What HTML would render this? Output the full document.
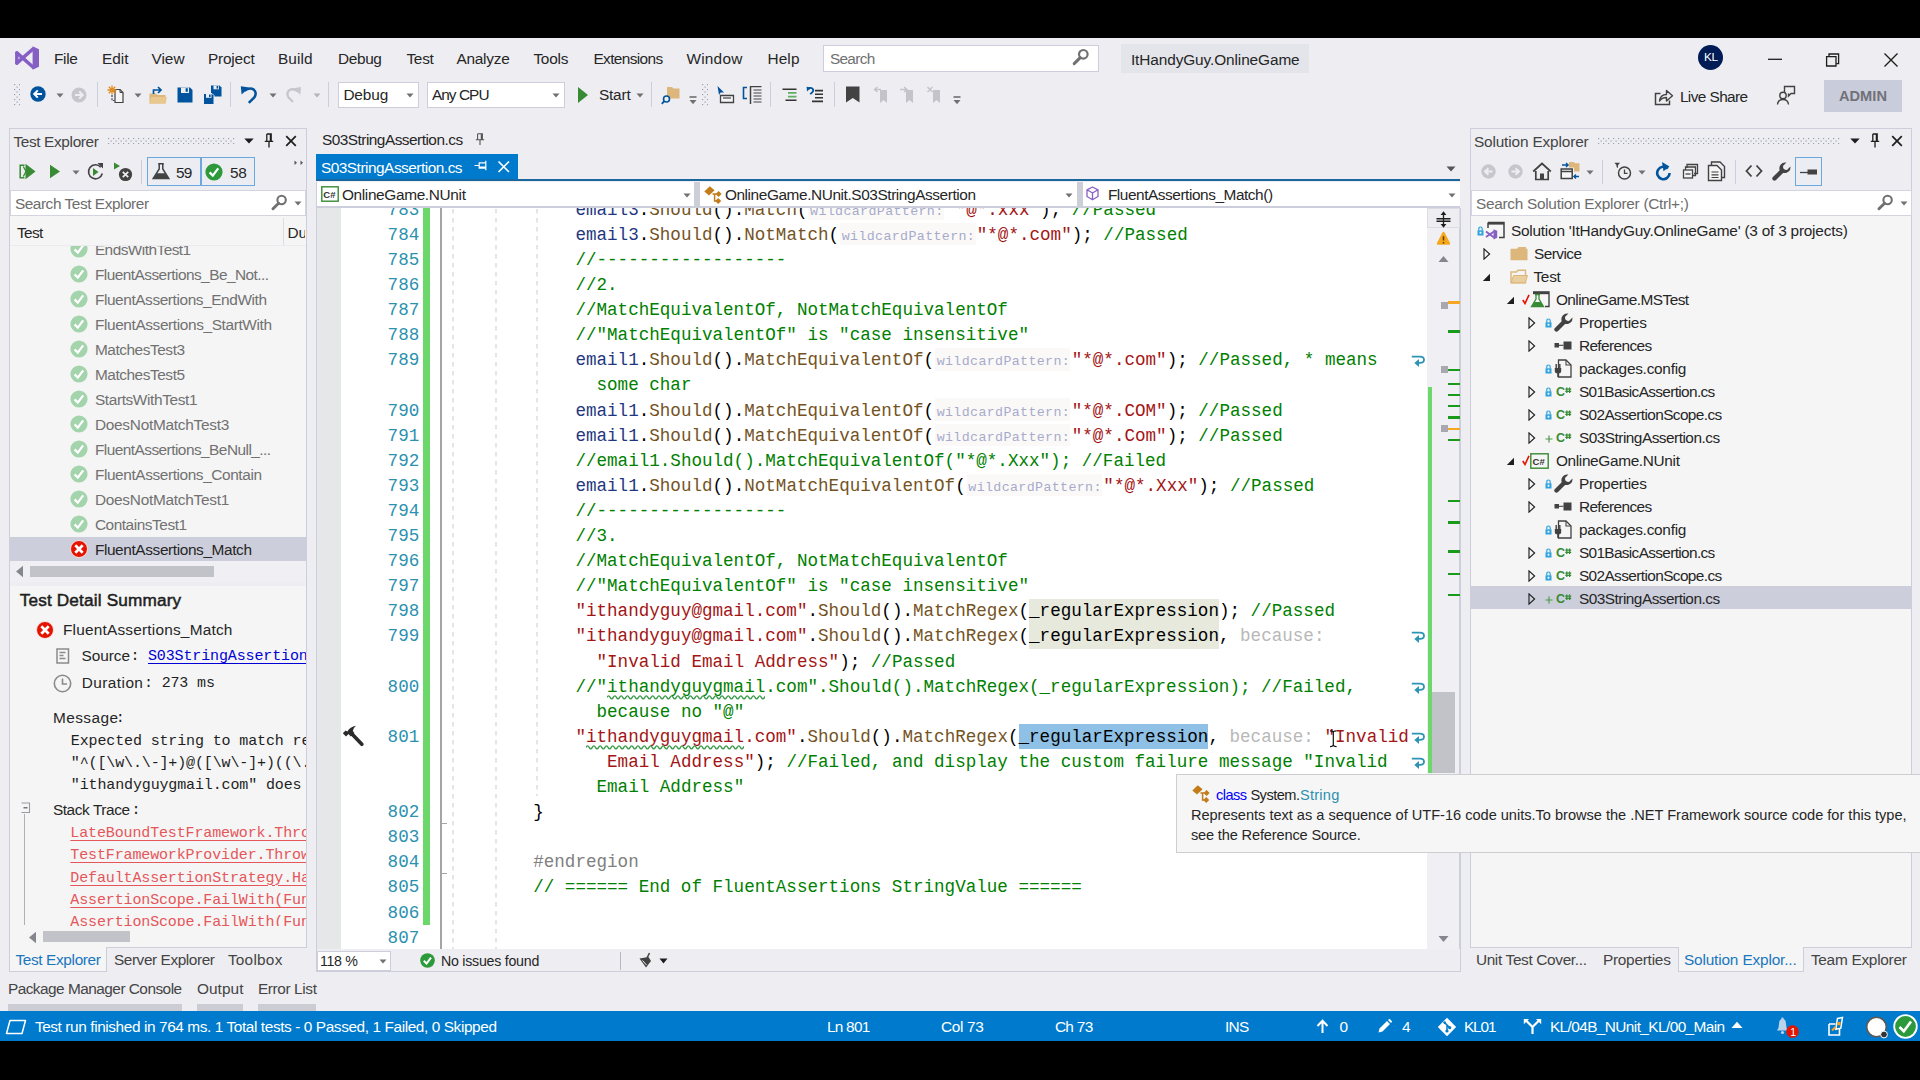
<!DOCTYPE html>
<html><head><meta charset="utf-8"><title>IDE</title><style>
html,body{margin:0;padding:0;background:#000;}
body{width:1920px;height:1080px;position:relative;overflow:hidden;font-family:"Liberation Sans",sans-serif;}
.a{position:absolute;display:block;}
.t{white-space:pre;}
</style></head><body>
<div class="a" style="left:0px;top:0px;width:1920px;height:38px;background:#000;"></div>
<div class="a" style="left:0px;top:38px;width:1920px;height:973px;background:#eeeef2;"></div>
<div class="a" style="left:0px;top:1011px;width:1920px;height:30px;background:#007acc;"></div>
<div class="a" style="left:0px;top:1041px;width:1920px;height:39px;background:#000;"></div>
<svg class="a" style="left:15px;top:46px;" width="24" height="24" viewBox="0 0 24 24"><path d="M17.6 0.2 L24 3.3 V20.7 L17.6 23.8 Z" fill="#865fc5"/><path d="M1.9 6.9 L18.2 21.2 M1.9 17.1 L18.2 2.8" stroke="#865fc5" stroke-width="3.5" stroke-linecap="round" fill="none"/><path d="M1.8 7 V17" stroke="#865fc5" stroke-width="3.4" stroke-linecap="round"/></svg>
<span class="a t" style="left:53.90px;top:48.51px;font-size:15.4px;line-height:20px;color:#262626;letter-spacing:-0.278px;">File</span>
<span class="a t" style="left:101.90px;top:48.51px;font-size:15.4px;line-height:20px;color:#262626;letter-spacing:0.042px;">Edit</span>
<span class="a t" style="left:151.40px;top:48.51px;font-size:15.4px;line-height:20px;color:#262626;letter-spacing:0.027px;">View</span>
<span class="a t" style="left:207.90px;top:48.51px;font-size:15.4px;line-height:20px;color:#262626;letter-spacing:-0.172px;">Project</span>
<span class="a t" style="left:277.90px;top:48.51px;font-size:15.4px;line-height:20px;color:#262626;letter-spacing:0.093px;">Build</span>
<span class="a t" style="left:337.90px;top:48.51px;font-size:15.4px;line-height:20px;color:#262626;letter-spacing:-0.332px;">Debug</span>
<span class="a t" style="left:406.40px;top:48.51px;font-size:15.4px;line-height:20px;color:#262626;letter-spacing:-0.259px;">Test</span>
<span class="a t" style="left:456.40px;top:48.51px;font-size:15.4px;line-height:20px;color:#262626;letter-spacing:-0.224px;">Analyze</span>
<span class="a t" style="left:533.40px;top:48.51px;font-size:15.4px;line-height:20px;color:#262626;letter-spacing:-0.247px;">Tools</span>
<span class="a t" style="left:593.40px;top:48.51px;font-size:15.4px;line-height:20px;color:#262626;letter-spacing:-0.610px;">Extensions</span>
<span class="a t" style="left:686.40px;top:48.51px;font-size:15.4px;line-height:20px;color:#262626;letter-spacing:0.242px;">Window</span>
<span class="a t" style="left:767.40px;top:48.51px;font-size:15.4px;line-height:20px;color:#262626;letter-spacing:0.136px;">Help</span>
<div class="a" style="left:823px;top:44.5px;width:276px;height:27px;background:#fff;border:1px solid #cccedb;box-sizing:border-box;"></div>
<span class="a t" style="left:829.90px;top:48.51px;font-size:15.4px;line-height:20px;color:#717171;letter-spacing:-0.678px;">Search</span>
<svg class="a" style="left:1071.5px;top:48.2px;" width="18" height="18" viewBox="0 0 18 18"><circle cx="11.3" cy="6.3" r="4.3" fill="none" stroke="#717171" stroke-width="2.2"/><path d="M8.2 9.6 L2.2 15.6" stroke="#717171" stroke-width="3" stroke-linecap="round"/></svg>
<div class="a" style="left:1121px;top:43.7px;width:187.5px;height:29.4px;background:#e4e5ea;"></div>
<span class="a t" style="left:1130.90px;top:50.31px;font-size:15.4px;line-height:20px;color:#262626;letter-spacing:-0.101px;">ItHandyGuy.OnlineGame</span>
<div class="a" style="left:1698.2px;top:44.7px;width:25px;height:25px;background:#001b55;border-radius:50%;"></div>
<span class="a t" style="left:1703.90px;top:50.20px;font-size:11.8px;line-height:15px;color:#fff;letter-spacing:-0.269px;">KL</span>
<svg class="a" style="left:1766px;top:50px;" width="18" height="18" viewBox="0 0 18 18"><path d="M2 9.3 H16" stroke="#1e1e1e" stroke-width="1.3"/></svg>
<svg class="a" style="left:1824px;top:51px;" width="18" height="18" viewBox="0 0 18 18"><path d="M2.6 5.6 H12 V15 H2.6 Z" fill="none" stroke="#1e1e1e" stroke-width="1.3"/><path d="M5 5.4 V3 H14.6 V12.6 H12.2" fill="none" stroke="#1e1e1e" stroke-width="1.3"/></svg>
<svg class="a" style="left:1882px;top:51px;" width="18" height="18" viewBox="0 0 18 18"><path d="M2.5 2.5 L15.5 15.5 M15.5 2.5 L2.5 15.5" stroke="#1e1e1e" stroke-width="1.4"/></svg>
<svg class="a" style="left:14px;top:84px" width="6.3" height="22"><defs><pattern id="vg14" width="5" height="5" patternUnits="userSpaceOnUse"><rect x="0" y="0" width="1.2" height="1.2" fill="#9a9cb0"/><rect x="2.5" y="2.5" width="1.2" height="1.2" fill="#9a9cb0"/></pattern></defs><rect width="6.3" height="22" fill="url(#vg14)"/></svg>
<svg class="a" style="left:30px;top:86px;" width="16" height="16" viewBox="0 0 16 16"><circle cx="8" cy="8" r="7.7" fill="#00539c"/><path d="M12 8 H4.6 M7.8 4.4 L4.2 8 L7.8 11.6" stroke="#fff" stroke-width="2" fill="none"/></svg>
<svg class="a" style="left:55.5px;top:92.5px;" width="8" height="5" viewBox="0 0 8 5"><path d="M0.5 0.5 H7.5 L4 4.5 Z" fill="#717171"/></svg>
<svg class="a" style="left:71px;top:87px;" width="16" height="16" viewBox="0 0 16 16"><circle cx="8" cy="8" r="7.5" fill="#c6c6cc"/><path d="M4 8 H11.4 M8.2 4.4 L11.8 8 L8.2 11.6" stroke="#eeeef2" stroke-width="2" fill="none"/></svg>
<div class="a" style="left:97px;top:82px;width:1px;height:25px;background:#cccedb;"></div>
<svg class="a" style="left:107px;top:85px;" width="18" height="20" viewBox="0 0 18 20"><path d="M8 4.5 H13 L16 7.5 V17.5 H8 Z" fill="#f5f5f5" stroke="#424242" stroke-width="1.2"/><path d="M13 4.5 V7.5 H16" fill="none" stroke="#424242" stroke-width="1"/><path d="M5 10 V15.5 H7.5" fill="none" stroke="#424242" stroke-width="1.2" stroke-dasharray="2 1.2"/><path d="M5 0.5 V9.5 M0.5 5 H9.5 M1.8 1.8 L8.2 8.2 M8.2 1.8 L1.8 8.2" stroke="#e08a1e" stroke-width="1.3"/></svg>
<svg class="a" style="left:133.5px;top:92.5px;" width="8" height="5" viewBox="0 0 8 5"><path d="M0.5 0.5 H7.5 L4 4.5 Z" fill="#717171"/></svg>
<svg class="a" style="left:148px;top:85px;" width="20" height="20" viewBox="0 0 20 20"><path d="M1.5 8.5 H8 L9.5 10 H17.5 V18.5 H1.5 Z" fill="#dcb67a"/><path d="M3 12 H19 L17.5 18.5 H1.5 Z" fill="#e8c88e"/><path d="M5.5 9 V5 H12.5 M10 2 L13 5 L10 8" fill="none" stroke="#00539c" stroke-width="1.7"/></svg>
<svg class="a" style="left:177px;top:87px;" width="16" height="16" viewBox="0 0 16 16"><path d="M0.5 0.5 H13 L15.5 3 V15.5 H0.5 Z" fill="#00539c"/><rect x="4" y="0.5" width="8" height="5.5" fill="#eeeef2"/><rect x="8.6" y="1.2" width="2.2" height="3.6" fill="#00539c"/></svg>
<svg class="a" style="left:203px;top:85px;" width="19" height="20" viewBox="0 0 19 20"><path d="M8 0.5 H16.5 L18.5 2.5 V11.5 H8 Z" fill="#00539c"/><rect x="10.5" y="0.5" width="5.5" height="3.8" fill="#eeeef2"/><rect x="13.6" y="1" width="1.6" height="2.6" fill="#00539c"/><path d="M0.5 8.5 H9 L11 10.5 V19.5 H0.5 Z" fill="#00539c" stroke="#eeeef2" stroke-width="1"/><rect x="3" y="9" width="5.5" height="3.8" fill="#eeeef2"/><rect x="6" y="9.5" width="1.6" height="2.6" fill="#00539c"/></svg>
<div class="a" style="left:230px;top:82px;width:1px;height:25px;background:#cccedb;"></div>
<svg class="a" style="left:240px;top:85px;" width="18" height="20" viewBox="0 0 18 20"><path d="M4.5 5.8 Q9.5 2 13.8 4.6 Q17.3 8 14.3 12.5 L8.8 17.8" fill="none" stroke="#00539c" stroke-width="2.5"/><path d="M0.8 1.2 L1.6 9.6 L9.2 2.4 Z" fill="#00539c"/></svg>
<svg class="a" style="left:268.5px;top:92.5px;" width="8" height="5" viewBox="0 0 8 5"><path d="M0.5 0.5 H7.5 L4 4.5 Z" fill="#717171"/></svg>
<svg class="a" style="left:285px;top:86px;" width="17" height="18" viewBox="0 0 17 18"><path d="M12.5 5.2 Q8 1.8 4 4.4 Q1 7.6 3.6 11.6 L8 16" fill="none" stroke="#c6c6cc" stroke-width="2.3"/><path d="M16 1 L15.3 8.8 L8.2 2.2 Z" fill="#c6c6cc"/></svg>
<svg class="a" style="left:312.5px;top:92.5px;" width="8" height="5" viewBox="0 0 8 5"><path d="M0.5 0.5 H7.5 L4 4.5 Z" fill="#b4b4ba"/></svg>
<div class="a" style="left:328px;top:82px;width:1px;height:25px;background:#cccedb;"></div>
<div class="a" style="left:338px;top:81.5px;width:80.5px;height:26px;background:#fff;border:1px solid #cccedb;box-sizing:border-box;"></div>
<span class="a t" style="left:343.40px;top:84.71px;font-size:15.4px;line-height:20px;color:#262626;letter-spacing:-0.132px;">Debug</span>
<svg class="a" style="left:405.5px;top:92.5px;" width="8" height="5" viewBox="0 0 8 5"><path d="M0.5 0.5 H7.5 L4 4.5 Z" fill="#717171"/></svg>
<div class="a" style="left:427px;top:81.5px;width:137.5px;height:26px;background:#fff;border:1px solid #cccedb;box-sizing:border-box;"></div>
<span class="a t" style="left:431.90px;top:84.71px;font-size:15.4px;line-height:20px;color:#262626;letter-spacing:-0.942px;">Any CPU</span>
<svg class="a" style="left:551.5px;top:92.5px;" width="8" height="5" viewBox="0 0 8 5"><path d="M0.5 0.5 H7.5 L4 4.5 Z" fill="#717171"/></svg>
<svg class="a" style="left:577px;top:86px;" width="12" height="18" viewBox="0 0 12 18"><path d="M1 1 L11 9 L1 17 Z" fill="#388a34"/></svg>
<span class="a t" style="left:598.90px;top:84.71px;font-size:15.4px;line-height:20px;color:#262626;letter-spacing:-0.163px;">Start</span>
<svg class="a" style="left:635.5px;top:92.5px;" width="8" height="5" viewBox="0 0 8 5"><path d="M0.5 0.5 H7.5 L4 4.5 Z" fill="#717171"/></svg>
<div class="a" style="left:651px;top:82px;width:1px;height:25px;background:#cccedb;"></div>
<svg class="a" style="left:661px;top:85px;" width="20" height="20" viewBox="0 0 20 20"><path d="M6 2 H11 L12.5 3.5 H18.5 V13.5 H6 Z" fill="#dcb67a"/><circle cx="5.5" cy="14" r="3" fill="#eeeef2" stroke="#00539c" stroke-width="1.6"/><path d="M3.3 16.2 L0.8 18.8" stroke="#00539c" stroke-width="1.8"/></svg>
<svg class="a" style="left:689px;top:96px;" width="8" height="9" viewBox="0 0 8 9"><path d="M0.5 1 H7.5" stroke="#424242" stroke-width="1.2"/><path d="M0.5 4 H7.5 L4 8.2 Z" fill="#717171"/></svg>
<svg class="a" style="left:702px;top:84px" width="6.3" height="22"><defs><pattern id="vg702" width="5" height="5" patternUnits="userSpaceOnUse"><rect x="0" y="0" width="1.2" height="1.2" fill="#9a9cb0"/><rect x="2.5" y="2.5" width="1.2" height="1.2" fill="#9a9cb0"/></pattern></defs><rect width="6.3" height="22" fill="url(#vg702)"/></svg>
<svg class="a" style="left:716px;top:85px;" width="20" height="20" viewBox="0 0 20 20"><path d="M1.5 1 L8 7.5 H4.6 L3 10 Z" fill="#00539c"/><path d="M4.5 10.5 H17.5 V17.5 H4.5 Z" fill="#f5f5f5" stroke="#424242" stroke-width="1.3"/><path d="M7 13 H15" stroke="#424242" stroke-width="1.2"/></svg>
<svg class="a" style="left:742px;top:85px;" width="21" height="20" viewBox="0 0 21 20"><path d="M5 2.5 H1.5 V13.5 H5" fill="none" stroke="#00539c" stroke-width="1.6"/><path d="M8.5 1 V19" stroke="#424242" stroke-width="1.5"/><path d="M8.5 1.6 H19.5 M11.5 5 H19.5 M11.5 8 H19.5 M11.5 11 H19.5 M11.5 14 H19.5 M11.5 17 H19.5" stroke="#424242" stroke-width="1.2"/></svg>
<div class="a" style="left:770px;top:82px;width:1px;height:25px;background:#cccedb;"></div>
<svg class="a" style="left:782px;top:87.5px;" width="15" height="14" viewBox="0 0 15 14"><path d="M0.5 1.2 H14.5 M3.5 12.3 H14.5" stroke="#333" stroke-width="1.6"/><path d="M6 4.9 H14.5 M6 8.6 H14.5" stroke="#5fae5f" stroke-width="1.6"/></svg>
<svg class="a" style="left:806px;top:86px;" width="18" height="18" viewBox="0 0 18 18"><path d="M9 4.6 H17 M9 8.2 H17 M9 11.8 H17 M6 15.4 H17" stroke="#333" stroke-width="1.6"/><path d="M2.5 3 Q4.5 1 6.5 2.6 Q8.2 4.6 6 6.6 L4.2 8.2" fill="none" stroke="#00539c" stroke-width="1.8"/><path d="M0.6 0.8 L1 5.6 L5 1.4 Z" fill="#00539c"/></svg>
<div class="a" style="left:834px;top:82px;width:1px;height:25px;background:#cccedb;"></div>
<svg class="a" style="left:845px;top:86px;" width="16" height="18" viewBox="0 0 16 18"><path d="M1 0.5 H14.5 V16.5 L7.8 12 L1 16.5 Z" fill="#424242"/></svg>
<svg class="a" style="left:873px;top:86px;" width="17" height="18" viewBox="0 0 17 18"><path d="M7 4 H14 V17 L10.5 14 L7 17 Z" fill="#c3c3c9"/><path d="M8 3.5 H2 M4.5 1 L1.5 3.5 L4.5 6" stroke="#c3c3c9" stroke-width="1.4" fill="none"/></svg>
<svg class="a" style="left:899px;top:86px;" width="17" height="18" viewBox="0 0 17 18"><path d="M7 4 H14 V17 L10.5 14 L7 17 Z" fill="#c3c3c9"/><path d="M1 3.5 H7.5 M5 1 L8 3.5 L5 6" stroke="#c3c3c9" stroke-width="1.4" fill="none"/></svg>
<svg class="a" style="left:926px;top:86px;" width="17" height="18" viewBox="0 0 17 18"><path d="M7 4 H14 V17 L10.5 14 L7 17 Z" fill="#c3c3c9"/><path d="M1.5 1 L6.5 6 M6.5 1 L1.5 6" stroke="#c3c3c9" stroke-width="1.4" fill="none"/></svg>
<svg class="a" style="left:953px;top:96px;" width="8" height="9" viewBox="0 0 8 9"><path d="M0.5 1 H7.5" stroke="#424242" stroke-width="1.2"/><path d="M0.5 4 H7.5 L4 8.2 Z" fill="#717171"/></svg>
<svg class="a" style="left:1654px;top:88px;" width="20" height="18" viewBox="0 0 20 18"><path d="M6.5 5.5 H1.5 V16.5 H15.5 V12.5" fill="none" stroke="#424242" stroke-width="1.5"/><path d="M5.5 13 Q6.5 6.5 12.5 6.5 V2.5 L18.5 7.8 L12.5 13 V9.5 Q8 9.5 5.5 13 Z" fill="none" stroke="#424242" stroke-width="1.4" stroke-linejoin="round"/></svg>
<span class="a t" style="left:1679.90px;top:86.91px;font-size:15.4px;line-height:20px;color:#262626;letter-spacing:-0.589px;">Live Share</span>
<svg class="a" style="left:1776px;top:85px;" width="20" height="20" viewBox="0 0 20 20"><path d="M8.5 8.5 V1.5 H18.5 V8.5 H15 L12.5 11 V8.5" fill="none" stroke="#424242" stroke-width="1.4"/><circle cx="7" cy="10.5" r="3.2" fill="#eeeef2" stroke="#424242" stroke-width="1.4"/><path d="M1.5 19.5 Q2 14.5 7 14.5 Q12 14.5 12.5 19.5" fill="none" stroke="#424242" stroke-width="1.4"/></svg>
<div class="a" style="left:1824px;top:80px;width:78px;height:32px;background:#c9ccda;"></div>
<span class="a t" style="left:1838.90px;top:86.87px;font-size:14.6px;line-height:19px;color:#717179;font-weight:700;letter-spacing:0.071px;">ADMIN</span>
<div class="a" style="left:8.5px;top:127.5px;width:298px;height:820px;background:#f5f5f5;border:1px solid #cccedb;box-sizing:border-box;"></div>
<div class="a" style="left:9.5px;top:128.5px;width:296px;height:61px;background:#eeeef2;"></div>
<span class="a t" style="left:13.40px;top:131.71px;font-size:15.4px;line-height:20px;color:#444;letter-spacing:-0.355px;">Test Explorer</span>
<svg class="a" style="left:108px;top:138px" width="127" height="6.3"><defs><pattern id="g108" width="5" height="5" patternUnits="userSpaceOnUse"><rect x="0" y="0" width="1.2" height="1.2" fill="#9a9cb0"/><rect x="2.5" y="2.5" width="1.2" height="1.2" fill="#9a9cb0"/></pattern></defs><rect width="127" height="6.3" fill="url(#g108)"/></svg>
<svg class="a" style="left:243.5px;top:138px;" width="10" height="6" viewBox="0 0 10 6"><path d="M0.3 0.5 H9.7 L5 5.5 Z" fill="#1e1e1e"/></svg>
<svg class="a" style="left:264px;top:133px;" width="10" height="16" viewBox="0 0 10 16"><path d="M2.8 1 H7.2 V8 M2.8 1 V8 M0.8 8.3 H9.2 M5 8.5 V14.5 M6.4 1 V8" stroke="#1e1e1e" stroke-width="1.3" fill="none"/></svg>
<svg class="a" style="left:285px;top:135px;" width="12" height="12" viewBox="0 0 12 12"><path d="M1.2 1.2 L10.8 10.8 M10.8 1.2 L1.2 10.8" stroke="#1e1e1e" stroke-width="1.7"/></svg>
<svg class="a" style="left:18.5px;top:163px;" width="17" height="17" viewBox="0 0 17 17"><path d="M5.5 2.2 H1.2 V14.8 H5.5" fill="none" stroke="#388a34" stroke-width="1.5"/><path d="M4.3 3.5 L7 8.5 L4.3 13.5" fill="none" stroke="#388a34" stroke-width="1.3"/><path d="M6.5 0.8 L16.5 8.5 L6.5 16.2 Z" fill="#388a34"/></svg>
<svg class="a" style="left:49px;top:163.5px;" width="12" height="15" viewBox="0 0 12 15"><path d="M1 0.8 L11 7.5 L1 14.2 Z" fill="#388a34"/></svg>
<svg class="a" style="left:71.5px;top:169.5px;" width="8" height="5" viewBox="0 0 8 5"><path d="M0.5 0.5 H7.5 L4 4.5 Z" fill="#717171"/></svg>
<svg class="a" style="left:86px;top:162px;" width="19" height="19" viewBox="0 0 19 19"><path d="M14.8 5.2 A7 7 0 1 0 16.3 11.5" fill="none" stroke="#424242" stroke-width="1.6"/><path d="M11.5 1 H17 V6.5 Z" fill="#424242"/><path d="M7 6 L12.5 10 L7 14 Z" fill="#388a34"/></svg>
<svg class="a" style="left:113px;top:161px;" width="20" height="21" viewBox="0 0 20 21"><path d="M1 1.5 L7 5 L1 8.5 Z" fill="#388a34"/><circle cx="12.5" cy="13.5" r="6.6" fill="#424242"/><path d="M9.8 10.8 L15.2 16.2 M15.2 10.8 L9.8 16.2" stroke="#eeeef2" stroke-width="1.7"/></svg>
<div class="a" style="left:141px;top:160px;width:1px;height:24px;background:#cccedb;"></div>
<div class="a" style="left:147px;top:157px;width:54px;height:28.5px;background:#ecedf3;border:1px solid #6aa9e0;box-sizing:border-box;"></div>
<div class="a" style="left:200.5px;top:157px;width:54.5px;height:28.5px;background:#ecedf3;border:1px solid #6aa9e0;box-sizing:border-box;"></div>
<svg class="a" style="left:152px;top:163px;" width="18" height="17" viewBox="0 0 18 17"><path d="M6.2 0.8 H11.8 M7.2 1 V6 L1.2 15.5 H16.8 L10.8 6 V1" fill="none" stroke="#424242" stroke-width="1.5"/><path d="M5 10.2 H13 L16.3 15.5 H1.7 Z" fill="#424242"/></svg>
<span class="a t" style="left:175.90px;top:162.51px;font-size:15.4px;line-height:20px;color:#262626;letter-spacing:-0.713px;">59</span>
<svg class="a" style="left:204.5px;top:162.5px;" width="18" height="18" viewBox="0 0 18 18"><circle cx="9" cy="9" r="8.6" fill="#2c9a3b"/><path d="M4.6 9.4 L7.8 12.6 L13.2 5.4" fill="none" stroke="#fff" stroke-width="2.3"/></svg>
<span class="a t" style="left:229.90px;top:162.51px;font-size:15.4px;line-height:20px;color:#262626;letter-spacing:-0.213px;">58</span>
<svg class="a" style="left:294px;top:160px;" width="10" height="6" viewBox="0 0 10 6"><path d="M0.5 0.5 L3 2.8 L0.5 5 Z M6.5 0.5 L9 2.8 L6.5 5 Z" fill="#555"/></svg>
<div class="a" style="left:10px;top:189.5px;width:295.5px;height:26.2px;background:#fff;border:1px solid #d3d4df;box-sizing:border-box;"></div>
<span class="a t" style="left:14.90px;top:193.71px;font-size:15.4px;line-height:20px;color:#6d6d6d;letter-spacing:-0.444px;">Search Test Explorer</span>
<svg class="a" style="left:271px;top:194px;" width="17" height="17" viewBox="0 0 17 17"><circle cx="10.6" cy="6" r="4.2" fill="none" stroke="#717171" stroke-width="2.1"/><path d="M7.6 9.2 L2 14.8" stroke="#717171" stroke-width="2.9" stroke-linecap="round"/></svg>
<svg class="a" style="left:293.5px;top:201px;" width="8" height="5" viewBox="0 0 8 5"><path d="M0.5 0.5 H7.5 L4 4.5 Z" fill="#717171"/></svg>
<div class="a" style="left:9.5px;top:216px;width:296px;height:30px;background:#f5f5f5;"></div>
<span class="a t" style="left:16.90px;top:222.51px;font-size:15.4px;line-height:20px;color:#262626;letter-spacing:-0.634px;">Test</span>
<div class="a" style="left:283px;top:218px;width:1px;height:27px;background:#dcdde4;"></div>
<span class="a t" style="left:287.40px;top:222.51px;font-size:15.4px;line-height:20px;color:#262626;width:18px;overflow:hidden;">Du</span>
<div class="a" style="left:9.5px;top:245px;width:296px;height:1px;background:#ebebef;"></div>
<div class="a" style="left:9.5px;top:246px;width:296px;height:316px;overflow:hidden">
<svg class="a" style="left:60.5px;top:-6.3px;" width="18" height="18" viewBox="0 0 18 18"><circle cx="9" cy="9" r="8.6" fill="#a3d4ab"/><path d="M4.6 9.4 L7.8 12.6 L13.2 5.4" fill="none" stroke="#fff" stroke-width="2.3"/></svg>
<span class="a t" style="left:85.40px;top:-6.19px;font-size:15.4px;line-height:20px;color:#717171;letter-spacing:-0.535px;">EndsWithTest1</span>
<svg class="a" style="left:60.5px;top:18.7px;" width="18" height="18" viewBox="0 0 18 18"><circle cx="9" cy="9" r="8.6" fill="#a3d4ab"/><path d="M4.6 9.4 L7.8 12.6 L13.2 5.4" fill="none" stroke="#fff" stroke-width="2.3"/></svg>
<span class="a t" style="left:85.40px;top:18.81px;font-size:15.4px;line-height:20px;color:#717171;letter-spacing:-0.525px;">FluentAssertions_Be_Not...</span>
<svg class="a" style="left:60.5px;top:43.7px;" width="18" height="18" viewBox="0 0 18 18"><circle cx="9" cy="9" r="8.6" fill="#a3d4ab"/><path d="M4.6 9.4 L7.8 12.6 L13.2 5.4" fill="none" stroke="#fff" stroke-width="2.3"/></svg>
<span class="a t" style="left:85.40px;top:43.81px;font-size:15.4px;line-height:20px;color:#717171;letter-spacing:-0.402px;">FluentAssertions_EndWith</span>
<svg class="a" style="left:60.5px;top:68.7px;" width="18" height="18" viewBox="0 0 18 18"><circle cx="9" cy="9" r="8.6" fill="#a3d4ab"/><path d="M4.6 9.4 L7.8 12.6 L13.2 5.4" fill="none" stroke="#fff" stroke-width="2.3"/></svg>
<span class="a t" style="left:85.40px;top:68.81px;font-size:15.4px;line-height:20px;color:#717171;letter-spacing:-0.376px;">FluentAssertions_StartWith</span>
<svg class="a" style="left:60.5px;top:93.7px;" width="18" height="18" viewBox="0 0 18 18"><circle cx="9" cy="9" r="8.6" fill="#a3d4ab"/><path d="M4.6 9.4 L7.8 12.6 L13.2 5.4" fill="none" stroke="#fff" stroke-width="2.3"/></svg>
<span class="a t" style="left:85.40px;top:93.81px;font-size:15.4px;line-height:20px;color:#717171;letter-spacing:-0.438px;">MatchesTest3</span>
<svg class="a" style="left:60.5px;top:118.7px;" width="18" height="18" viewBox="0 0 18 18"><circle cx="9" cy="9" r="8.6" fill="#a3d4ab"/><path d="M4.6 9.4 L7.8 12.6 L13.2 5.4" fill="none" stroke="#fff" stroke-width="2.3"/></svg>
<span class="a t" style="left:85.40px;top:118.81px;font-size:15.4px;line-height:20px;color:#717171;letter-spacing:-0.438px;">MatchesTest5</span>
<svg class="a" style="left:60.5px;top:143.7px;" width="18" height="18" viewBox="0 0 18 18"><circle cx="9" cy="9" r="8.6" fill="#a3d4ab"/><path d="M4.6 9.4 L7.8 12.6 L13.2 5.4" fill="none" stroke="#fff" stroke-width="2.3"/></svg>
<span class="a t" style="left:85.40px;top:143.81px;font-size:15.4px;line-height:20px;color:#717171;letter-spacing:-0.371px;">StartsWithTest1</span>
<svg class="a" style="left:60.5px;top:168.7px;" width="18" height="18" viewBox="0 0 18 18"><circle cx="9" cy="9" r="8.6" fill="#a3d4ab"/><path d="M4.6 9.4 L7.8 12.6 L13.2 5.4" fill="none" stroke="#fff" stroke-width="2.3"/></svg>
<span class="a t" style="left:85.40px;top:168.81px;font-size:15.4px;line-height:20px;color:#717171;letter-spacing:-0.258px;">DoesNotMatchTest3</span>
<svg class="a" style="left:60.5px;top:193.7px;" width="18" height="18" viewBox="0 0 18 18"><circle cx="9" cy="9" r="8.6" fill="#a3d4ab"/><path d="M4.6 9.4 L7.8 12.6 L13.2 5.4" fill="none" stroke="#fff" stroke-width="2.3"/></svg>
<span class="a t" style="left:85.40px;top:193.81px;font-size:15.4px;line-height:20px;color:#717171;letter-spacing:-0.527px;">FluentAssertions_BeNull_...</span>
<svg class="a" style="left:60.5px;top:218.7px;" width="18" height="18" viewBox="0 0 18 18"><circle cx="9" cy="9" r="8.6" fill="#a3d4ab"/><path d="M4.6 9.4 L7.8 12.6 L13.2 5.4" fill="none" stroke="#fff" stroke-width="2.3"/></svg>
<span class="a t" style="left:85.40px;top:218.81px;font-size:15.4px;line-height:20px;color:#717171;letter-spacing:-0.397px;">FluentAssertions_Contain</span>
<svg class="a" style="left:60.5px;top:243.7px;" width="18" height="18" viewBox="0 0 18 18"><circle cx="9" cy="9" r="8.6" fill="#a3d4ab"/><path d="M4.6 9.4 L7.8 12.6 L13.2 5.4" fill="none" stroke="#fff" stroke-width="2.3"/></svg>
<span class="a t" style="left:85.40px;top:243.81px;font-size:15.4px;line-height:20px;color:#717171;letter-spacing:-0.258px;">DoesNotMatchTest1</span>
<svg class="a" style="left:60.5px;top:268.7px;" width="18" height="18" viewBox="0 0 18 18"><circle cx="9" cy="9" r="8.6" fill="#a3d4ab"/><path d="M4.6 9.4 L7.8 12.6 L13.2 5.4" fill="none" stroke="#fff" stroke-width="2.3"/></svg>
<span class="a t" style="left:85.40px;top:268.81px;font-size:15.4px;line-height:20px;color:#717171;letter-spacing:-0.449px;">ContainsTest1</span>
</div>
<div class="a" style="left:9.5px;top:536.5px;width:296px;height:24px;background:#cccedb;"></div>
<svg class="a" style="left:70px;top:540px;" width="18" height="18" viewBox="0 0 18 18"><circle cx="9" cy="9" r="8.5" fill="#e51400" stroke="#fbeceb" stroke-width="0.9"/><path d="M5.3 5.3 L12.7 12.7 M12.7 5.3 L5.3 12.7" stroke="#fff" stroke-width="2.7"/></svg>
<span class="a t" style="left:94.90px;top:539.91px;font-size:15.4px;line-height:20px;color:#262626;letter-spacing:-0.382px;">FluentAssertions_Match</span>
<div class="a" style="left:9.5px;top:561px;width:296px;height:21px;background:#f0f0f4;"></div>
<svg class="a" style="left:15px;top:565px;" width="9" height="13" viewBox="0 0 9 13"><path d="M8 0.8 V12.2 L1 6.5 Z" fill="#86868e"/></svg>
<div class="a" style="left:30px;top:566px;width:184px;height:11px;background:#c2c3c9;"></div>
<div class="a" style="left:9.5px;top:582px;width:296px;height:4px;background:#eeeef2;"></div>
<span class="a t" style="left:19.70px;top:588.91px;font-size:17.2px;line-height:22px;color:#1e1e1e;letter-spacing:0.161px;-webkit-text-stroke:0.5px #1e1e1e;">Test Detail Summary</span>
<svg class="a" style="left:36px;top:621px;" width="18" height="18" viewBox="0 0 18 18"><circle cx="9" cy="9" r="8.5" fill="#e51400" stroke="#fbeceb" stroke-width="0.9"/><path d="M5.3 5.3 L12.7 12.7 M12.7 5.3 L5.3 12.7" stroke="#fff" stroke-width="2.7"/></svg>
<span class="a t" style="left:62.90px;top:619.61px;font-size:15.4px;line-height:20px;color:#262626;letter-spacing:0.209px;">FluentAssertions_Match</span>
<svg class="a" style="left:56px;top:648px;" width="14" height="16" viewBox="0 0 14 16"><path d="M1 1 H12.5 V15 H1 Z" fill="#f5f5f5" stroke="#8a8a8a" stroke-width="1.5"/><path d="M3.5 4.5 H9.5 M3.5 7.5 H7.5 M3.5 10.5 H9.5" stroke="#8a8a8a" stroke-width="1.4"/></svg>
<div class="a" style="left:9.5px;top:590px;width:296.5px;height:336px;overflow:hidden">
<span class="a t" style="left:71.90px;top:55.61px;font-size:15.4px;line-height:20px;color:#262626;letter-spacing:-0.011px;">Source</span>
<span class="a t" style="left:121.10px;top:57.30px;font-size:15px;line-height:20px;color:#1e1e1e;font-family:'Liberation Mono', monospace;letter-spacing:-0.1315px;">:</span>
<span class="a t" style="left:138.50px;top:57.30px;font-size:15px;line-height:20px;color:#0000d6;font-family:'Liberation Mono', monospace;letter-spacing:-0.1315px;text-decoration:underline;text-decoration-thickness:1.2px;text-underline-offset:2.6px;">S03StringAssertion.cs</span>
<span class="a t" style="left:72.20px;top:82.51px;font-size:15.4px;line-height:20px;color:#262626;letter-spacing:0.439px;">Duration</span>
<span class="a t" style="left:134.40px;top:84.30px;font-size:15px;line-height:20px;color:#1e1e1e;font-family:'Liberation Mono', monospace;letter-spacing:-0.1315px;">: 273 ms</span>
<span class="a t" style="left:43.40px;top:117.71px;font-size:15.4px;line-height:20px;color:#262626;letter-spacing:0.435px;">Message</span>
<span class="a t" style="left:106.30px;top:119.40px;font-size:15px;line-height:20px;color:#1e1e1e;font-family:'Liberation Mono', monospace;letter-spacing:-0.1315px;">:</span>
<span class="a t" style="left:61.30px;top:141.60px;font-size:15px;line-height:20px;color:#1e1e1e;font-family:'Liberation Mono', monospace;letter-spacing:-0.1315px;">Expected string to match regex</span>
<span class="a t" style="left:61.30px;top:163.60px;font-size:15px;line-height:20px;color:#1e1e1e;font-family:'Liberation Mono', monospace;letter-spacing:-0.1315px;">&quot;^([\w\.\-]+)@([\w\-]+)((\.(\w){2,3})+)$&quot;</span>
<span class="a t" style="left:61.30px;top:186.40px;font-size:15px;line-height:20px;color:#1e1e1e;font-family:'Liberation Mono', monospace;letter-spacing:-0.1315px;">&quot;ithandyguygmail.com&quot; does not match.</span>
<span class="a t" style="left:43.40px;top:209.91px;font-size:15.4px;line-height:20px;color:#262626;letter-spacing:-0.415px;">Stack Trace</span>
<span class="a t" style="left:122.00px;top:211.30px;font-size:15px;line-height:20px;color:#1e1e1e;font-family:'Liberation Mono', monospace;letter-spacing:-0.1315px;">:</span>
<span class="a t" style="left:60.80px;top:234.00px;font-size:15px;line-height:20px;color:#e5565a;font-family:'Liberation Mono', monospace;letter-spacing:-0.1315px;text-decoration:underline;text-decoration-thickness:1.2px;text-underline-offset:2.6px;">LateBoundTestFramework.Throw(String message)</span>
<span class="a t" style="left:60.80px;top:256.20px;font-size:15px;line-height:20px;color:#e5565a;font-family:'Liberation Mono', monospace;letter-spacing:-0.1315px;text-decoration:underline;text-decoration-thickness:1.2px;text-underline-offset:2.6px;">TestFrameworkProvider.Throw(String message)</span>
<span class="a t" style="left:60.80px;top:278.50px;font-size:15px;line-height:20px;color:#e5565a;font-family:'Liberation Mono', monospace;letter-spacing:-0.1315px;text-decoration:underline;text-decoration-thickness:1.2px;text-underline-offset:2.6px;">DefaultAssertionStrategy.HandleFailure(String message)</span>
<span class="a t" style="left:60.80px;top:300.80px;font-size:15px;line-height:20px;color:#e5565a;font-family:'Liberation Mono', monospace;letter-spacing:-0.1315px;text-decoration:underline;text-decoration-thickness:1.2px;text-underline-offset:2.6px;">AssertionScope.FailWith(Func`1 failReasonFunc)</span>
<span class="a t" style="left:60.80px;top:323.00px;font-size:15px;line-height:20px;color:#e5565a;font-family:'Liberation Mono', monospace;letter-spacing:-0.1315px;text-decoration:underline;text-decoration-thickness:1.2px;text-underline-offset:2.6px;">AssertionScope.FailWith(Func`1 failReasonFunc)</span>
</div>
<svg class="a" style="left:53px;top:674px;" width="19" height="19" viewBox="0 0 19 19"><circle cx="9.5" cy="9.5" r="8.2" fill="none" stroke="#8a8a8a" stroke-width="1.6"/><path d="M9.5 4.5 V10 H14" fill="none" stroke="#8a8a8a" stroke-width="1.6"/></svg>
<svg class="a" style="left:20px;top:802px;" width="11" height="12" viewBox="0 0 11 12"><path d="M1.5 1 H9.5 V10.5 H1.5" fill="none" stroke="#9a9aa2" stroke-width="1.1"/><path d="M3.5 5.8 H7.5" stroke="#55555c" stroke-width="1.2"/></svg>
<div class="a" style="left:24px;top:814px;width:1px;height:111px;background:#b0b0b8;"></div>
<svg class="a" style="left:27.5px;top:930.5px;" width="9" height="13" viewBox="0 0 9 13"><path d="M8 0.8 V12.2 L1 6.5 Z" fill="#86868e"/></svg>
<div class="a" style="left:43px;top:931px;width:87px;height:11px;background:#c2c3c9;"></div>
<div class="a" style="left:8.5px;top:947px;width:98px;height:24.5px;background:#f5f5f5;border:1px solid #cccedb;box-sizing:border-box;border-top:none;"></div>
<span class="a t" style="left:15.40px;top:949.91px;font-size:15.4px;line-height:20px;color:#1a77be;letter-spacing:-0.355px;">Test Explorer</span>
<span class="a t" style="left:113.90px;top:949.91px;font-size:15.4px;line-height:20px;color:#444;letter-spacing:-0.415px;">Server Explorer</span>
<span class="a t" style="left:227.90px;top:949.91px;font-size:15.4px;line-height:20px;color:#444;letter-spacing:0.234px;">Toolbox</span>
<span class="a t" style="left:321.90px;top:129.91px;font-size:15.4px;line-height:20px;color:#262626;letter-spacing:-0.511px;">S03StringAssertion.cs</span>
<svg class="a" style="left:475px;top:133px;" width="10" height="13" viewBox="0 0 10 13"><path d="M2.6 0.8 H7.4 V6.5 M2.6 0.8 V6.5 M0.8 6.8 H9.2 M5 7 V12 M6.3 1 V6.5" stroke="#555" stroke-width="1.1" fill="none"/></svg>
<div class="a" style="left:316px;top:154px;width:202px;height:27.2px;background:#007acc;"></div>
<div class="a" style="left:316px;top:178.8px;width:1144px;height:2.3px;background:#1b669d;"></div>
<span class="a t" style="left:320.90px;top:157.61px;font-size:15.4px;line-height:20px;color:#fff;letter-spacing:-0.487px;">S03StringAssertion.cs</span>
<svg class="a" style="left:474px;top:160px;" width="13" height="11" viewBox="0 0 13 11"><path d="M5.2 2.2 V8.8 M5.2 2.8 H11.5 M5.2 8.2 H11.5 M5.5 7 H11.5 M11.8 0.8 V10.2 M0.5 5.5 H5" stroke="#fff" stroke-width="1.2" fill="none"/></svg>
<svg class="a" style="left:497px;top:160px;" width="14" height="14" viewBox="0 0 14 14"><path d="M1.5 1.5 L12 12 M12 1.5 L1.5 12" stroke="#fff" stroke-width="1.7"/></svg>
<svg class="a" style="left:1446px;top:165.5px;" width="10" height="6" viewBox="0 0 10 6"><path d="M0.5 0.5 H9.5 L5 5.5 Z" fill="#555"/></svg>
<div class="a" style="left:316px;top:181.7px;width:1144px;height:25.8px;background:#fff;"></div>
<div class="a" style="left:316px;top:206.2px;width:1144px;height:1.6px;background:#cccedb;"></div>
<div class="a" style="left:316px;top:181.7px;width:1.2px;height:26px;background:#cccedb;"></div>
<div class="a" style="left:694px;top:181.7px;width:6px;height:25px;background:#ccced8;"></div>
<div class="a" style="left:1077px;top:181.7px;width:6px;height:25px;background:#ccced8;"></div>
<svg class="a" style="left:321px;top:186px;" width="18" height="16" viewBox="0 0 18 16"><rect x="0.8" y="0.8" width="16.4" height="14.4" fill="#fff" stroke="#388a34" stroke-width="1.4"/><text x="2.3" y="11.8" font-family="Liberation Sans" font-weight="700" font-size="9.5" fill="#333">C#</text></svg>
<span class="a t" style="left:341.90px;top:185.11px;font-size:15.4px;line-height:20px;color:#262626;letter-spacing:-0.342px;">OnlineGame.NUnit</span>
<svg class="a" style="left:683px;top:192.5px;" width="8" height="5" viewBox="0 0 8 5"><path d="M0.5 0.5 H7.5 L4 4.5 Z" fill="#717171"/></svg>
<svg class="a" style="left:704px;top:185.5px;" width="18" height="18" viewBox="0 0 18 18"><path d="M0.3 5.4 L5.8 0.3 L10.6 4.3 L5 9.6 Z" fill="#c27d1a"/><path d="M8.5 8 H12.5 M10.6 8 V15 H12" fill="none" stroke="#c27d1a" stroke-width="1.5"/><path d="M14.6 5 L17.6 8 L14.6 11 L11.6 8 Z M14.2 12 L17.2 15 L14.2 18 L11.2 15 Z" fill="#c27d1a"/></svg>
<span class="a t" style="left:724.90px;top:185.11px;font-size:15.4px;line-height:20px;color:#262626;letter-spacing:-0.414px;">OnlineGame.NUnit.S03StringAssertion</span>
<svg class="a" style="left:1065px;top:192.5px;" width="8" height="5" viewBox="0 0 8 5"><path d="M0.5 0.5 H7.5 L4 4.5 Z" fill="#717171"/></svg>
<svg class="a" style="left:1086px;top:186px;" width="13" height="15" viewBox="0 0 13 15"><path d="M6.5 1 L12 3.8 V10.5 L6.5 13.8 L1 10.5 V3.8 Z M1 3.8 L6.5 7 L12 3.8 M6.5 7 V13.8" fill="none" stroke="#8a5fc4" stroke-width="1.3" stroke-linejoin="round"/></svg>
<span class="a t" style="left:1107.90px;top:185.11px;font-size:15.4px;line-height:20px;color:#262626;letter-spacing:-0.444px;">FluentAssertions_Match()</span>
<svg class="a" style="left:1448px;top:192.5px;" width="8" height="5" viewBox="0 0 8 5"><path d="M0.5 0.5 H7.5 L4 4.5 Z" fill="#717171"/></svg>
<div class="a" style="left:316px;top:207.5px;width:1144px;height:741.5px;background:#fff;"></div>
<div class="a" style="left:316px;top:207.5px;width:1.2px;height:741.5px;background:#cccedb;"></div>
<div class="a" style="left:317.2px;top:207.5px;width:24px;height:741.5px;background:#e6e7e8;"></div>
<div class="a" style="left:422.6px;top:207.5px;width:7.5px;height:717px;background:#6cd86c;"></div>
<div class="a" style="left:440.2px;top:207.5px;width:1.6px;height:741.5px;background:#a5a5a5;"></div>
<div class="a" style="left:441px;top:823px;width:6px;height:1.2px;background:#a5a5a5;"></div>
<div class="a" style="left:441px;top:873px;width:6px;height:1.2px;background:#a5a5a5;"></div>
<svg class="a" style="left:452.1px;top:207.5px;" width="2" height="741.5" viewBox="0 0 2 741.5"><path d="M1 1 V741.5" stroke="#d2d2d2" stroke-width="1.15" stroke-dasharray="4.4 4.6"/></svg>
<svg class="a" style="left:495.2px;top:207.5px;" width="2" height="741.5" viewBox="0 0 2 741.5"><path d="M1 1 V741.5" stroke="#d2d2d2" stroke-width="1.15" stroke-dasharray="4.4 4.6"/></svg>
<svg class="a" style="left:536.2px;top:207.5px;" width="2" height="588.5" viewBox="0 0 2 588.5"><path d="M1 1 V588.5" stroke="#d2d2d2" stroke-width="1.15" stroke-dasharray="4.4 4.6"/></svg>
<div class="a" style="left:0;top:207.5px;width:1460px;height:741.5px;overflow:hidden">
<span class="a t" style="left:387.60px;top:-8.79px;font-size:17.58px;line-height:23px;color:#2b91af;font-family:'Liberation Mono', monospace;letter-spacing:0.0002px;">783</span>
<span class="a t" style="left:387.60px;top:16.31px;font-size:17.58px;line-height:23px;color:#2b91af;font-family:'Liberation Mono', monospace;letter-spacing:0.0002px;">784</span>
<span class="a t" style="left:387.60px;top:41.41px;font-size:17.58px;line-height:23px;color:#2b91af;font-family:'Liberation Mono', monospace;letter-spacing:0.0002px;">785</span>
<span class="a t" style="left:387.60px;top:66.51px;font-size:17.58px;line-height:23px;color:#2b91af;font-family:'Liberation Mono', monospace;letter-spacing:0.0002px;">786</span>
<span class="a t" style="left:387.60px;top:91.61px;font-size:17.58px;line-height:23px;color:#2b91af;font-family:'Liberation Mono', monospace;letter-spacing:0.0002px;">787</span>
<span class="a t" style="left:387.60px;top:116.71px;font-size:17.58px;line-height:23px;color:#2b91af;font-family:'Liberation Mono', monospace;letter-spacing:0.0002px;">788</span>
<span class="a t" style="left:387.60px;top:141.81px;font-size:17.58px;line-height:23px;color:#2b91af;font-family:'Liberation Mono', monospace;letter-spacing:0.0002px;">789</span>
<span class="a t" style="left:387.60px;top:192.01px;font-size:17.58px;line-height:23px;color:#2b91af;font-family:'Liberation Mono', monospace;letter-spacing:0.0002px;">790</span>
<span class="a t" style="left:387.60px;top:217.11px;font-size:17.58px;line-height:23px;color:#2b91af;font-family:'Liberation Mono', monospace;letter-spacing:0.0002px;">791</span>
<span class="a t" style="left:387.60px;top:242.21px;font-size:17.58px;line-height:23px;color:#2b91af;font-family:'Liberation Mono', monospace;letter-spacing:0.0002px;">792</span>
<span class="a t" style="left:387.60px;top:267.31px;font-size:17.58px;line-height:23px;color:#2b91af;font-family:'Liberation Mono', monospace;letter-spacing:0.0002px;">793</span>
<span class="a t" style="left:387.60px;top:292.41px;font-size:17.58px;line-height:23px;color:#2b91af;font-family:'Liberation Mono', monospace;letter-spacing:0.0002px;">794</span>
<span class="a t" style="left:387.60px;top:317.51px;font-size:17.58px;line-height:23px;color:#2b91af;font-family:'Liberation Mono', monospace;letter-spacing:0.0002px;">795</span>
<span class="a t" style="left:387.60px;top:342.61px;font-size:17.58px;line-height:23px;color:#2b91af;font-family:'Liberation Mono', monospace;letter-spacing:0.0002px;">796</span>
<span class="a t" style="left:387.60px;top:367.71px;font-size:17.58px;line-height:23px;color:#2b91af;font-family:'Liberation Mono', monospace;letter-spacing:0.0002px;">797</span>
<span class="a t" style="left:387.60px;top:392.81px;font-size:17.58px;line-height:23px;color:#2b91af;font-family:'Liberation Mono', monospace;letter-spacing:0.0002px;">798</span>
<span class="a t" style="left:387.60px;top:417.91px;font-size:17.58px;line-height:23px;color:#2b91af;font-family:'Liberation Mono', monospace;letter-spacing:0.0002px;">799</span>
<span class="a t" style="left:387.60px;top:468.11px;font-size:17.58px;line-height:23px;color:#2b91af;font-family:'Liberation Mono', monospace;letter-spacing:0.0002px;">800</span>
<span class="a t" style="left:387.60px;top:518.31px;font-size:17.58px;line-height:23px;color:#2b91af;font-family:'Liberation Mono', monospace;letter-spacing:0.0002px;">801</span>
<span class="a t" style="left:387.60px;top:593.61px;font-size:17.58px;line-height:23px;color:#2b91af;font-family:'Liberation Mono', monospace;letter-spacing:0.0002px;">802</span>
<span class="a t" style="left:387.60px;top:618.71px;font-size:17.58px;line-height:23px;color:#2b91af;font-family:'Liberation Mono', monospace;letter-spacing:0.0002px;">803</span>
<span class="a t" style="left:387.60px;top:643.81px;font-size:17.58px;line-height:23px;color:#2b91af;font-family:'Liberation Mono', monospace;letter-spacing:0.0002px;">804</span>
<span class="a t" style="left:387.60px;top:668.91px;font-size:17.58px;line-height:23px;color:#2b91af;font-family:'Liberation Mono', monospace;letter-spacing:0.0002px;">805</span>
<span class="a t" style="left:387.60px;top:694.01px;font-size:17.58px;line-height:23px;color:#2b91af;font-family:'Liberation Mono', monospace;letter-spacing:0.0002px;">806</span>
<span class="a t" style="left:387.60px;top:719.11px;font-size:17.58px;line-height:23px;color:#2b91af;font-family:'Liberation Mono', monospace;letter-spacing:0.0002px;">807</span>
<span class="a t" style="left:575.40px;top:-8.79px;font-size:17.58px;line-height:23px;color:#1f377f;font-family:'Liberation Mono', monospace;letter-spacing:0.0002px;">email3</span>
<span class="a t" style="left:638.70px;top:-8.79px;font-size:17.58px;line-height:23px;color:#000000;font-family:'Liberation Mono', monospace;letter-spacing:0.0002px;">.</span>
<span class="a t" style="left:649.25px;top:-8.79px;font-size:17.58px;line-height:23px;color:#74531f;font-family:'Liberation Mono', monospace;letter-spacing:0.0002px;">Should</span>
<span class="a t" style="left:712.55px;top:-8.79px;font-size:17.58px;line-height:23px;color:#000000;font-family:'Liberation Mono', monospace;letter-spacing:0.0002px;">().</span>
<span class="a t" style="left:744.20px;top:-8.79px;font-size:17.58px;line-height:23px;color:#74531f;font-family:'Liberation Mono', monospace;letter-spacing:0.0002px;">Match</span>
<span class="a t" style="left:796.95px;top:-8.79px;font-size:17.58px;line-height:23px;color:#000000;font-family:'Liberation Mono', monospace;letter-spacing:0.0002px;">(</span>
<div class="a" style="left:808.3px;top:-9.9px;width:135.6px;height:22.8px;background:#fbf9f7;"></div>
<span class="a t" style="left:810.10px;top:-4.65px;font-size:13.3px;line-height:17px;color:#a6abcc;font-family:'Liberation Mono', monospace;letter-spacing:0.3587px;">wildcardPattern:</span>
<span class="a t" style="left:945.10px;top:-8.79px;font-size:17.58px;line-height:23px;color:#a31515;font-family:'Liberation Mono', monospace;letter-spacing:0.0002px;">&quot;*@*.xxx&quot;</span>
<span class="a t" style="left:1040.05px;top:-8.79px;font-size:17.58px;line-height:23px;color:#000000;font-family:'Liberation Mono', monospace;letter-spacing:0.0002px;">); </span>
<span class="a t" style="left:1071.70px;top:-8.79px;font-size:17.58px;line-height:23px;color:#008000;font-family:'Liberation Mono', monospace;letter-spacing:0.0002px;">//Passed</span>
<span class="a t" style="left:575.40px;top:16.31px;font-size:17.58px;line-height:23px;color:#1f377f;font-family:'Liberation Mono', monospace;letter-spacing:0.0002px;">email3</span>
<span class="a t" style="left:638.70px;top:16.31px;font-size:17.58px;line-height:23px;color:#000000;font-family:'Liberation Mono', monospace;letter-spacing:0.0002px;">.</span>
<span class="a t" style="left:649.25px;top:16.31px;font-size:17.58px;line-height:23px;color:#74531f;font-family:'Liberation Mono', monospace;letter-spacing:0.0002px;">Should</span>
<span class="a t" style="left:712.55px;top:16.31px;font-size:17.58px;line-height:23px;color:#000000;font-family:'Liberation Mono', monospace;letter-spacing:0.0002px;">().</span>
<span class="a t" style="left:744.20px;top:16.31px;font-size:17.58px;line-height:23px;color:#74531f;font-family:'Liberation Mono', monospace;letter-spacing:0.0002px;">NotMatch</span>
<span class="a t" style="left:828.60px;top:16.31px;font-size:17.58px;line-height:23px;color:#000000;font-family:'Liberation Mono', monospace;letter-spacing:0.0002px;">(</span>
<div class="a" style="left:839.95px;top:15.2px;width:135.6px;height:22.8px;background:#fbf9f7;"></div>
<span class="a t" style="left:841.75px;top:20.45px;font-size:13.3px;line-height:17px;color:#a6abcc;font-family:'Liberation Mono', monospace;letter-spacing:0.3587px;">wildcardPattern:</span>
<span class="a t" style="left:976.75px;top:16.31px;font-size:17.58px;line-height:23px;color:#a31515;font-family:'Liberation Mono', monospace;letter-spacing:0.0002px;">&quot;*@*.com&quot;</span>
<span class="a t" style="left:1071.70px;top:16.31px;font-size:17.58px;line-height:23px;color:#000000;font-family:'Liberation Mono', monospace;letter-spacing:0.0002px;">); </span>
<span class="a t" style="left:1103.35px;top:16.31px;font-size:17.58px;line-height:23px;color:#008000;font-family:'Liberation Mono', monospace;letter-spacing:0.0002px;">//Passed</span>
<span class="a t" style="left:575.40px;top:41.41px;font-size:17.58px;line-height:23px;color:#008000;font-family:'Liberation Mono', monospace;letter-spacing:0.0002px;">//------------------</span>
<span class="a t" style="left:575.40px;top:66.51px;font-size:17.58px;line-height:23px;color:#008000;font-family:'Liberation Mono', monospace;letter-spacing:0.0002px;">//2.</span>
<span class="a t" style="left:575.40px;top:91.61px;font-size:17.58px;line-height:23px;color:#008000;font-family:'Liberation Mono', monospace;letter-spacing:0.0002px;">//MatchEquivalentOf, NotMatchEquivalentOf</span>
<span class="a t" style="left:575.40px;top:116.71px;font-size:17.58px;line-height:23px;color:#008000;font-family:'Liberation Mono', monospace;letter-spacing:0.0002px;">//&quot;MatchEquivalentOf&quot; is &quot;case insensitive&quot;</span>
<span class="a t" style="left:575.40px;top:141.81px;font-size:17.58px;line-height:23px;color:#1f377f;font-family:'Liberation Mono', monospace;letter-spacing:0.0002px;">email1</span>
<span class="a t" style="left:638.70px;top:141.81px;font-size:17.58px;line-height:23px;color:#000000;font-family:'Liberation Mono', monospace;letter-spacing:0.0002px;">.</span>
<span class="a t" style="left:649.25px;top:141.81px;font-size:17.58px;line-height:23px;color:#74531f;font-family:'Liberation Mono', monospace;letter-spacing:0.0002px;">Should</span>
<span class="a t" style="left:712.55px;top:141.81px;font-size:17.58px;line-height:23px;color:#000000;font-family:'Liberation Mono', monospace;letter-spacing:0.0002px;">().</span>
<span class="a t" style="left:744.20px;top:141.81px;font-size:17.58px;line-height:23px;color:#74531f;font-family:'Liberation Mono', monospace;letter-spacing:0.0002px;">MatchEquivalentOf</span>
<span class="a t" style="left:923.55px;top:141.81px;font-size:17.58px;line-height:23px;color:#000000;font-family:'Liberation Mono', monospace;letter-spacing:0.0002px;">(</span>
<div class="a" style="left:934.9px;top:140.7px;width:135.6px;height:22.8px;background:#fbf9f7;"></div>
<span class="a t" style="left:936.70px;top:145.95px;font-size:13.3px;line-height:17px;color:#a6abcc;font-family:'Liberation Mono', monospace;letter-spacing:0.3587px;">wildcardPattern:</span>
<span class="a t" style="left:1071.70px;top:141.81px;font-size:17.58px;line-height:23px;color:#a31515;font-family:'Liberation Mono', monospace;letter-spacing:0.0002px;">&quot;*@*.com&quot;</span>
<span class="a t" style="left:1166.65px;top:141.81px;font-size:17.58px;line-height:23px;color:#000000;font-family:'Liberation Mono', monospace;letter-spacing:0.0002px;">); </span>
<span class="a t" style="left:1198.30px;top:141.81px;font-size:17.58px;line-height:23px;color:#008000;font-family:'Liberation Mono', monospace;letter-spacing:0.0002px;">//Passed, * means</span>
<svg class="a" style="left:1410.5px;top:146.7px;" width="15" height="14" viewBox="0 0 15 14"><path d="M0.8 2.6 H9 Q13 2.6 13 5.7 Q13 8.8 9 8.8 H7.5" fill="none" stroke="#2f93b3" stroke-width="1.8"/><path d="M3.3 8.9 L8 4.9 V12.9 Z" fill="#2f93b3"/></svg>
<span class="a t" style="left:596.50px;top:166.91px;font-size:17.58px;line-height:23px;color:#008000;font-family:'Liberation Mono', monospace;letter-spacing:0.0002px;">some char</span>
<span class="a t" style="left:575.40px;top:192.01px;font-size:17.58px;line-height:23px;color:#1f377f;font-family:'Liberation Mono', monospace;letter-spacing:0.0002px;">email1</span>
<span class="a t" style="left:638.70px;top:192.01px;font-size:17.58px;line-height:23px;color:#000000;font-family:'Liberation Mono', monospace;letter-spacing:0.0002px;">.</span>
<span class="a t" style="left:649.25px;top:192.01px;font-size:17.58px;line-height:23px;color:#74531f;font-family:'Liberation Mono', monospace;letter-spacing:0.0002px;">Should</span>
<span class="a t" style="left:712.55px;top:192.01px;font-size:17.58px;line-height:23px;color:#000000;font-family:'Liberation Mono', monospace;letter-spacing:0.0002px;">().</span>
<span class="a t" style="left:744.20px;top:192.01px;font-size:17.58px;line-height:23px;color:#74531f;font-family:'Liberation Mono', monospace;letter-spacing:0.0002px;">MatchEquivalentOf</span>
<span class="a t" style="left:923.55px;top:192.01px;font-size:17.58px;line-height:23px;color:#000000;font-family:'Liberation Mono', monospace;letter-spacing:0.0002px;">(</span>
<div class="a" style="left:934.9px;top:190.9px;width:135.6px;height:22.8px;background:#fbf9f7;"></div>
<span class="a t" style="left:936.70px;top:196.15px;font-size:13.3px;line-height:17px;color:#a6abcc;font-family:'Liberation Mono', monospace;letter-spacing:0.3587px;">wildcardPattern:</span>
<span class="a t" style="left:1071.70px;top:192.01px;font-size:17.58px;line-height:23px;color:#a31515;font-family:'Liberation Mono', monospace;letter-spacing:0.0002px;">&quot;*@*.COM&quot;</span>
<span class="a t" style="left:1166.65px;top:192.01px;font-size:17.58px;line-height:23px;color:#000000;font-family:'Liberation Mono', monospace;letter-spacing:0.0002px;">); </span>
<span class="a t" style="left:1198.30px;top:192.01px;font-size:17.58px;line-height:23px;color:#008000;font-family:'Liberation Mono', monospace;letter-spacing:0.0002px;">//Passed</span>
<span class="a t" style="left:575.40px;top:217.11px;font-size:17.58px;line-height:23px;color:#1f377f;font-family:'Liberation Mono', monospace;letter-spacing:0.0002px;">email1</span>
<span class="a t" style="left:638.70px;top:217.11px;font-size:17.58px;line-height:23px;color:#000000;font-family:'Liberation Mono', monospace;letter-spacing:0.0002px;">.</span>
<span class="a t" style="left:649.25px;top:217.11px;font-size:17.58px;line-height:23px;color:#74531f;font-family:'Liberation Mono', monospace;letter-spacing:0.0002px;">Should</span>
<span class="a t" style="left:712.55px;top:217.11px;font-size:17.58px;line-height:23px;color:#000000;font-family:'Liberation Mono', monospace;letter-spacing:0.0002px;">().</span>
<span class="a t" style="left:744.20px;top:217.11px;font-size:17.58px;line-height:23px;color:#74531f;font-family:'Liberation Mono', monospace;letter-spacing:0.0002px;">MatchEquivalentOf</span>
<span class="a t" style="left:923.55px;top:217.11px;font-size:17.58px;line-height:23px;color:#000000;font-family:'Liberation Mono', monospace;letter-spacing:0.0002px;">(</span>
<div class="a" style="left:934.9px;top:216px;width:135.6px;height:22.8px;background:#fbf9f7;"></div>
<span class="a t" style="left:936.70px;top:221.25px;font-size:13.3px;line-height:17px;color:#a6abcc;font-family:'Liberation Mono', monospace;letter-spacing:0.3587px;">wildcardPattern:</span>
<span class="a t" style="left:1071.70px;top:217.11px;font-size:17.58px;line-height:23px;color:#a31515;font-family:'Liberation Mono', monospace;letter-spacing:0.0002px;">&quot;*@*.Com&quot;</span>
<span class="a t" style="left:1166.65px;top:217.11px;font-size:17.58px;line-height:23px;color:#000000;font-family:'Liberation Mono', monospace;letter-spacing:0.0002px;">); </span>
<span class="a t" style="left:1198.30px;top:217.11px;font-size:17.58px;line-height:23px;color:#008000;font-family:'Liberation Mono', monospace;letter-spacing:0.0002px;">//Passed</span>
<span class="a t" style="left:575.40px;top:242.21px;font-size:17.58px;line-height:23px;color:#008000;font-family:'Liberation Mono', monospace;letter-spacing:0.0002px;">//email1.Should().MatchEquivalentOf(&quot;*@*.Xxx&quot;); //Failed</span>
<span class="a t" style="left:575.40px;top:267.31px;font-size:17.58px;line-height:23px;color:#1f377f;font-family:'Liberation Mono', monospace;letter-spacing:0.0002px;">email1</span>
<span class="a t" style="left:638.70px;top:267.31px;font-size:17.58px;line-height:23px;color:#000000;font-family:'Liberation Mono', monospace;letter-spacing:0.0002px;">.</span>
<span class="a t" style="left:649.25px;top:267.31px;font-size:17.58px;line-height:23px;color:#74531f;font-family:'Liberation Mono', monospace;letter-spacing:0.0002px;">Should</span>
<span class="a t" style="left:712.55px;top:267.31px;font-size:17.58px;line-height:23px;color:#000000;font-family:'Liberation Mono', monospace;letter-spacing:0.0002px;">().</span>
<span class="a t" style="left:744.20px;top:267.31px;font-size:17.58px;line-height:23px;color:#74531f;font-family:'Liberation Mono', monospace;letter-spacing:0.0002px;">NotMatchEquivalentOf</span>
<span class="a t" style="left:955.20px;top:267.31px;font-size:17.58px;line-height:23px;color:#000000;font-family:'Liberation Mono', monospace;letter-spacing:0.0002px;">(</span>
<div class="a" style="left:966.55px;top:266.2px;width:135.6px;height:22.8px;background:#fbf9f7;"></div>
<span class="a t" style="left:968.35px;top:271.45px;font-size:13.3px;line-height:17px;color:#a6abcc;font-family:'Liberation Mono', monospace;letter-spacing:0.3587px;">wildcardPattern:</span>
<span class="a t" style="left:1103.35px;top:267.31px;font-size:17.58px;line-height:23px;color:#a31515;font-family:'Liberation Mono', monospace;letter-spacing:0.0002px;">&quot;*@*.Xxx&quot;</span>
<span class="a t" style="left:1198.30px;top:267.31px;font-size:17.58px;line-height:23px;color:#000000;font-family:'Liberation Mono', monospace;letter-spacing:0.0002px;">); </span>
<span class="a t" style="left:1229.95px;top:267.31px;font-size:17.58px;line-height:23px;color:#008000;font-family:'Liberation Mono', monospace;letter-spacing:0.0002px;">//Passed</span>
<span class="a t" style="left:575.40px;top:292.41px;font-size:17.58px;line-height:23px;color:#008000;font-family:'Liberation Mono', monospace;letter-spacing:0.0002px;">//------------------</span>
<span class="a t" style="left:575.40px;top:317.51px;font-size:17.58px;line-height:23px;color:#008000;font-family:'Liberation Mono', monospace;letter-spacing:0.0002px;">//3.</span>
<span class="a t" style="left:575.40px;top:342.61px;font-size:17.58px;line-height:23px;color:#008000;font-family:'Liberation Mono', monospace;letter-spacing:0.0002px;">//MatchEquivalentOf, NotMatchEquivalentOf</span>
<span class="a t" style="left:575.40px;top:367.71px;font-size:17.58px;line-height:23px;color:#008000;font-family:'Liberation Mono', monospace;letter-spacing:0.0002px;">//&quot;MatchEquivalentOf&quot; is &quot;case insensitive&quot;</span>
<span class="a t" style="left:575.40px;top:392.81px;font-size:17.58px;line-height:23px;color:#a31515;font-family:'Liberation Mono', monospace;letter-spacing:0.0002px;">&quot;ithandyguy@gmail.com&quot;</span>
<span class="a t" style="left:807.50px;top:392.81px;font-size:17.58px;line-height:23px;color:#000000;font-family:'Liberation Mono', monospace;letter-spacing:0.0002px;">.</span>
<span class="a t" style="left:818.05px;top:392.81px;font-size:17.58px;line-height:23px;color:#74531f;font-family:'Liberation Mono', monospace;letter-spacing:0.0002px;">Should</span>
<span class="a t" style="left:881.35px;top:392.81px;font-size:17.58px;line-height:23px;color:#000000;font-family:'Liberation Mono', monospace;letter-spacing:0.0002px;">().</span>
<span class="a t" style="left:913.00px;top:392.81px;font-size:17.58px;line-height:23px;color:#74531f;font-family:'Liberation Mono', monospace;letter-spacing:0.0002px;">MatchRegex</span>
<span class="a t" style="left:1018.50px;top:392.81px;font-size:17.58px;line-height:23px;color:#000000;font-family:'Liberation Mono', monospace;letter-spacing:0.0002px;">(</span>
<div class="a" style="left:1029.05px;top:391.4px;width:189.9px;height:25px;background:#e6e9dc;"></div>
<span class="a t" style="left:1029.05px;top:392.81px;font-size:17.58px;line-height:23px;color:#000000;font-family:'Liberation Mono', monospace;letter-spacing:0.0002px;">_regularExpression</span>
<span class="a t" style="left:1218.95px;top:392.81px;font-size:17.58px;line-height:23px;color:#000000;font-family:'Liberation Mono', monospace;letter-spacing:0.0002px;">); </span>
<span class="a t" style="left:1250.60px;top:392.81px;font-size:17.58px;line-height:23px;color:#008000;font-family:'Liberation Mono', monospace;letter-spacing:0.0002px;">//Passed</span>
<span class="a t" style="left:575.40px;top:417.91px;font-size:17.58px;line-height:23px;color:#a31515;font-family:'Liberation Mono', monospace;letter-spacing:0.0002px;">&quot;ithandyguy@gmail.com&quot;</span>
<span class="a t" style="left:807.50px;top:417.91px;font-size:17.58px;line-height:23px;color:#000000;font-family:'Liberation Mono', monospace;letter-spacing:0.0002px;">.</span>
<span class="a t" style="left:818.05px;top:417.91px;font-size:17.58px;line-height:23px;color:#74531f;font-family:'Liberation Mono', monospace;letter-spacing:0.0002px;">Should</span>
<span class="a t" style="left:881.35px;top:417.91px;font-size:17.58px;line-height:23px;color:#000000;font-family:'Liberation Mono', monospace;letter-spacing:0.0002px;">().</span>
<span class="a t" style="left:913.00px;top:417.91px;font-size:17.58px;line-height:23px;color:#74531f;font-family:'Liberation Mono', monospace;letter-spacing:0.0002px;">MatchRegex</span>
<span class="a t" style="left:1018.50px;top:417.91px;font-size:17.58px;line-height:23px;color:#000000;font-family:'Liberation Mono', monospace;letter-spacing:0.0002px;">(</span>
<div class="a" style="left:1029.05px;top:416.5px;width:189.9px;height:25px;background:#e6e9dc;"></div>
<span class="a t" style="left:1029.05px;top:417.91px;font-size:17.58px;line-height:23px;color:#000000;font-family:'Liberation Mono', monospace;letter-spacing:0.0002px;">_regularExpression</span>
<span class="a t" style="left:1218.95px;top:417.91px;font-size:17.58px;line-height:23px;color:#000000;font-family:'Liberation Mono', monospace;letter-spacing:0.0002px;">, </span>
<span class="a t" style="left:1240.05px;top:417.91px;font-size:17.58px;line-height:23px;color:#b8b8b8;font-family:'Liberation Mono', monospace;letter-spacing:0.0002px;">because:</span>
<svg class="a" style="left:1410.5px;top:422.8px;" width="15" height="14" viewBox="0 0 15 14"><path d="M0.8 2.6 H9 Q13 2.6 13 5.7 Q13 8.8 9 8.8 H7.5" fill="none" stroke="#2f93b3" stroke-width="1.8"/><path d="M3.3 8.9 L8 4.9 V12.9 Z" fill="#2f93b3"/></svg>
<span class="a t" style="left:596.50px;top:443.01px;font-size:17.58px;line-height:23px;color:#a31515;font-family:'Liberation Mono', monospace;letter-spacing:0.0002px;">&quot;Invalid Email Address&quot;</span>
<span class="a t" style="left:839.15px;top:443.01px;font-size:17.58px;line-height:23px;color:#000000;font-family:'Liberation Mono', monospace;letter-spacing:0.0002px;">); </span>
<span class="a t" style="left:870.80px;top:443.01px;font-size:17.58px;line-height:23px;color:#008000;font-family:'Liberation Mono', monospace;letter-spacing:0.0002px;">//Passed</span>
<span class="a t" style="left:575.40px;top:468.11px;font-size:17.58px;line-height:23px;color:#008000;font-family:'Liberation Mono', monospace;letter-spacing:0.0002px;">//&quot;ithandyguygmail.com&quot;.Should().MatchRegex(_regularExpression); //Failed,</span>
<svg class="a" style="left:607.05px;top:487px;" width="158.25" height="5" viewBox="0 0 158.25 5"><path d="M0 2.4 q1.575 -3 3.15 0 t3.15 0 t3.15 0 t3.15 0 t3.15 0 t3.15 0 t3.15 0 t3.15 0 t3.15 0 t3.15 0 t3.15 0 t3.15 0 t3.15 0 t3.15 0 t3.15 0 t3.15 0 t3.15 0 t3.15 0 t3.15 0 t3.15 0 t3.15 0 t3.15 0 t3.15 0 t3.15 0 t3.15 0 t3.15 0 t3.15 0 t3.15 0 t3.15 0 t3.15 0 t3.15 0 t3.15 0 t3.15 0 t3.15 0 t3.15 0 t3.15 0 t3.15 0 t3.15 0 t3.15 0 t3.15 0 t3.15 0 t3.15 0 t3.15 0 t3.15 0 t3.15 0 t3.15 0 t3.15 0 t3.15 0 t3.15 0 t3.15 0 t3.15 0" fill="none" stroke="#3a9a48" stroke-width="1.35"/></svg>
<svg class="a" style="left:1410.5px;top:473px;" width="15" height="14" viewBox="0 0 15 14"><path d="M0.8 2.6 H9 Q13 2.6 13 5.7 Q13 8.8 9 8.8 H7.5" fill="none" stroke="#2f93b3" stroke-width="1.8"/><path d="M3.3 8.9 L8 4.9 V12.9 Z" fill="#2f93b3"/></svg>
<span class="a t" style="left:596.50px;top:493.21px;font-size:17.58px;line-height:23px;color:#008000;font-family:'Liberation Mono', monospace;letter-spacing:0.0002px;">because no &quot;@&quot;</span>
<span class="a t" style="left:575.40px;top:518.31px;font-size:17.58px;line-height:23px;color:#a31515;font-family:'Liberation Mono', monospace;letter-spacing:0.0002px;">&quot;ithandyguygmail.com&quot;</span>
<svg class="a" style="left:585.95px;top:537.2px;" width="158.25" height="5" viewBox="0 0 158.25 5"><path d="M0 2.4 q1.575 -3 3.15 0 t3.15 0 t3.15 0 t3.15 0 t3.15 0 t3.15 0 t3.15 0 t3.15 0 t3.15 0 t3.15 0 t3.15 0 t3.15 0 t3.15 0 t3.15 0 t3.15 0 t3.15 0 t3.15 0 t3.15 0 t3.15 0 t3.15 0 t3.15 0 t3.15 0 t3.15 0 t3.15 0 t3.15 0 t3.15 0 t3.15 0 t3.15 0 t3.15 0 t3.15 0 t3.15 0 t3.15 0 t3.15 0 t3.15 0 t3.15 0 t3.15 0 t3.15 0 t3.15 0 t3.15 0 t3.15 0 t3.15 0 t3.15 0 t3.15 0 t3.15 0 t3.15 0 t3.15 0 t3.15 0 t3.15 0 t3.15 0 t3.15 0 t3.15 0" fill="none" stroke="#3a9a48" stroke-width="1.35"/></svg>
<span class="a t" style="left:796.95px;top:518.31px;font-size:17.58px;line-height:23px;color:#000000;font-family:'Liberation Mono', monospace;letter-spacing:0.0002px;">.</span>
<span class="a t" style="left:807.50px;top:518.31px;font-size:17.58px;line-height:23px;color:#74531f;font-family:'Liberation Mono', monospace;letter-spacing:0.0002px;">Should</span>
<span class="a t" style="left:870.80px;top:518.31px;font-size:17.58px;line-height:23px;color:#000000;font-family:'Liberation Mono', monospace;letter-spacing:0.0002px;">().</span>
<span class="a t" style="left:902.45px;top:518.31px;font-size:17.58px;line-height:23px;color:#74531f;font-family:'Liberation Mono', monospace;letter-spacing:0.0002px;">MatchRegex</span>
<span class="a t" style="left:1007.95px;top:518.31px;font-size:17.58px;line-height:23px;color:#000000;font-family:'Liberation Mono', monospace;letter-spacing:0.0002px;">(</span>
<div class="a" style="left:1018.5px;top:516.9px;width:189.9px;height:25px;background:#8fc0e6;"></div>
<span class="a t" style="left:1018.50px;top:518.31px;font-size:17.58px;line-height:23px;color:#000000;font-family:'Liberation Mono', monospace;letter-spacing:0.0002px;">_regularExpression</span>
<span class="a t" style="left:1208.40px;top:518.31px;font-size:17.58px;line-height:23px;color:#000000;font-family:'Liberation Mono', monospace;letter-spacing:0.0002px;">, </span>
<span class="a t" style="left:1229.50px;top:518.31px;font-size:17.58px;line-height:23px;color:#b8b8b8;font-family:'Liberation Mono', monospace;letter-spacing:0.0002px;">because:</span>
<span class="a t" style="left:1324.45px;top:518.31px;font-size:17.58px;line-height:23px;color:#a31515;font-family:'Liberation Mono', monospace;letter-spacing:0.0002px;">&quot;Invalid</span>
<svg class="a" style="left:1410.5px;top:523.2px;" width="15" height="14" viewBox="0 0 15 14"><path d="M0.8 2.6 H9 Q13 2.6 13 5.7 Q13 8.8 9 8.8 H7.5" fill="none" stroke="#2f93b3" stroke-width="1.8"/><path d="M3.3 8.9 L8 4.9 V12.9 Z" fill="#2f93b3"/></svg>
<span class="a t" style="left:596.50px;top:543.41px;font-size:17.58px;line-height:23px;color:#a31515;font-family:'Liberation Mono', monospace;letter-spacing:0.0002px;"> Email Address&quot;</span>
<span class="a t" style="left:754.75px;top:543.41px;font-size:17.58px;line-height:23px;color:#000000;font-family:'Liberation Mono', monospace;letter-spacing:0.0002px;">); </span>
<span class="a t" style="left:786.40px;top:543.41px;font-size:17.58px;line-height:23px;color:#008000;font-family:'Liberation Mono', monospace;letter-spacing:0.0002px;">//Failed, and display the custom failure message &quot;Invalid</span>
<svg class="a" style="left:1410.5px;top:548.3px;" width="15" height="14" viewBox="0 0 15 14"><path d="M0.8 2.6 H9 Q13 2.6 13 5.7 Q13 8.8 9 8.8 H7.5" fill="none" stroke="#2f93b3" stroke-width="1.8"/><path d="M3.3 8.9 L8 4.9 V12.9 Z" fill="#2f93b3"/></svg>
<span class="a t" style="left:596.50px;top:568.51px;font-size:17.58px;line-height:23px;color:#008000;font-family:'Liberation Mono', monospace;letter-spacing:0.0002px;">Email Address&quot;</span>
<span class="a t" style="left:533.20px;top:593.61px;font-size:17.58px;line-height:23px;color:#000000;font-family:'Liberation Mono', monospace;letter-spacing:0.0002px;">}</span>
<span class="a t" style="left:533.20px;top:643.81px;font-size:17.58px;line-height:23px;color:#808080;font-family:'Liberation Mono', monospace;letter-spacing:0.0002px;">#endregion</span>
<span class="a t" style="left:533.20px;top:668.91px;font-size:17.58px;line-height:23px;color:#008000;font-family:'Liberation Mono', monospace;letter-spacing:0.0002px;">// ====== End of FluentAssertions StringValue ======</span>
</div>
<svg class="a" style="left:342px;top:725px;" width="22" height="22" viewBox="0 0 22 22"><path d="M0.8 8.2 L3.6 5.4 L5.4 6.4 Q8 1.8 14 0.8 Q10.8 3.4 10.8 6 L12.4 8 L8.6 11.4 L6.6 9 L4 11.4 Z" fill="#2b2b2b"/><path d="M10.5 9.5 L19.8 19.3" stroke="#2b2b2b" stroke-width="3.6" stroke-linecap="round"/></svg>
<svg class="a" style="left:1329px;top:730px;" width="9" height="18" viewBox="0 0 9 18"><path d="M1 0.9 Q4.3 0.9 4.3 2.6 Q4.3 0.9 7.6 0.9 M4.3 2.4 V14.8 M1 16.6 Q4.3 16.6 4.3 14.8 Q4.3 16.6 7.6 16.6" fill="none" stroke="#111" stroke-width="1.2"/></svg>
<div class="a" style="left:1426.5px;top:207.5px;width:33.5px;height:741.5px;background:#f0f0f4;"></div>
<div class="a" style="left:1459.4px;top:207.5px;width:1.2px;height:763.5px;background:#cccedb;"></div>
<div class="a" style="left:1426.5px;top:207.5px;width:33.5px;height:20.5px;background:#eeeef2;border:1px solid #dcdde4;box-sizing:border-box;"></div>
<svg class="a" style="left:1435.5px;top:210.5px;" width="15" height="17" viewBox="0 0 15 17"><path d="M0.5 7.7 H14.5 M0.5 10.2 H14.5" stroke="#1e1e1e" stroke-width="1.5"/><path d="M7.5 2.5 V15" stroke="#1e1e1e" stroke-width="1.3"/><path d="M7.5 0.3 L4.6 4 H10.4 Z M7.5 16.7 L4.6 13 H10.4 Z" fill="#1e1e1e"/></svg>
<svg class="a" style="left:1435.5px;top:231px;" width="15" height="15" viewBox="0 0 15 15"><path d="M7.5 2 L13 12.5 H2 Z" fill="#f5a81c" stroke="#f5a81c" stroke-width="2.4" stroke-linejoin="round"/><path d="M7.5 5.2 V9.6 M7.5 11 V12.4" stroke="#6a3b00" stroke-width="1.5"/></svg>
<svg class="a" style="left:1438px;top:255px;" width="11" height="8" viewBox="0 0 11 8"><path d="M0.5 7 L5.5 1 L10.5 7 Z" fill="#86868e"/></svg>
<svg class="a" style="left:1438px;top:935px;" width="11" height="8" viewBox="0 0 11 8"><path d="M0.5 1 L5.5 7 L10.5 1 Z" fill="#86868e"/></svg>
<div class="a" style="left:1448px;top:301.3px;width:12px;height:2.4px;background:#f5a623;"></div>
<div class="a" style="left:1448px;top:330.2px;width:12px;height:2.4px;background:#1a9a1a;"></div>
<div class="a" style="left:1448px;top:368.8px;width:12px;height:2.4px;background:#1a9a1a;"></div>
<div class="a" style="left:1448px;top:382.8px;width:12px;height:2.4px;background:#1a9a1a;"></div>
<div class="a" style="left:1448px;top:393.8px;width:12px;height:2.4px;background:#1a9a1a;"></div>
<div class="a" style="left:1448px;top:405.1px;width:12px;height:2.4px;background:#1a9a1a;"></div>
<div class="a" style="left:1448px;top:416.3px;width:12px;height:2.4px;background:#1a9a1a;"></div>
<div class="a" style="left:1448px;top:427.8px;width:12px;height:2.4px;background:#f5a623;"></div>
<div class="a" style="left:1448px;top:439.1px;width:12px;height:2.4px;background:#1a9a1a;"></div>
<div class="a" style="left:1448px;top:499.6px;width:12px;height:2.4px;background:#1a9a1a;"></div>
<div class="a" style="left:1448px;top:521.3px;width:12px;height:2.4px;background:#1a9a1a;"></div>
<div class="a" style="left:1448px;top:550.2px;width:12px;height:2.4px;background:#1a9a1a;"></div>
<div class="a" style="left:1448px;top:572.8px;width:12px;height:2.4px;background:#1a9a1a;"></div>
<div class="a" style="left:1448px;top:593.5px;width:12px;height:2.4px;background:#1a9a1a;"></div>
<div class="a" style="left:1441px;top:302px;width:6.5px;height:7px;background:#a8a8ae;"></div>
<div class="a" style="left:1441px;top:366px;width:6.5px;height:7px;background:#a8a8ae;"></div>
<div class="a" style="left:1441px;top:425px;width:6.5px;height:7px;background:#a8a8ae;"></div>
<div class="a" style="left:1427.6px;top:387px;width:4.6px;height:386px;background:#6cd86c;"></div>
<div class="a" style="left:1432.3px;top:692px;width:22.7px;height:81px;background:#c2c3c9;"></div>
<div class="a" style="left:316px;top:949px;width:1144px;height:22.5px;background:#eeeef2;"></div>
<div class="a" style="left:316px;top:971px;width:1144.6px;height:1.2px;background:#cccedb;"></div>
<div class="a" style="left:316px;top:949px;width:1.2px;height:22px;background:#cccedb;"></div>
<div class="a" style="left:317px;top:950.5px;width:73.5px;height:20px;background:#fff;border:1px solid #cccedb;box-sizing:border-box;"></div>
<span class="a t" style="left:319.90px;top:951.91px;font-size:14.2px;line-height:18px;color:#262626;letter-spacing:-0.297px;">118 %</span>
<svg class="a" style="left:379px;top:958.5px;" width="8" height="5" viewBox="0 0 8 5"><path d="M0.5 0.5 H7.5 L4 4.5 Z" fill="#717171"/></svg>
<svg class="a" style="left:420px;top:953px;" width="15" height="15" viewBox="0 0 15 15"><circle cx="7.5" cy="7.5" r="7.3" fill="#2c9a3b"/><path d="M3.8 7.8 L6.5 10.5 L11 4.6" fill="none" stroke="#fff" stroke-width="2"/></svg>
<span class="a t" style="left:440.90px;top:951.91px;font-size:14.2px;line-height:18px;color:#262626;letter-spacing:-0.237px;">No issues found</span>
<div class="a" style="left:619.5px;top:952px;width:1px;height:18px;background:#b8b9c4;"></div>
<svg class="a" style="left:637px;top:951.5px;" width="17" height="17" viewBox="0 0 17 17"><path d="M12.5 1 L10 6" stroke="#424242" stroke-width="1.6"/><path d="M2.5 6.5 L11.5 5 L14 9 L9 15.5 Z" fill="#424242"/><path d="M5.5 8.5 L9.5 13" stroke="#eeeef2" stroke-width="1"/></svg>
<svg class="a" style="left:658.5px;top:957.5px;" width="9" height="6" viewBox="0 0 9 6"><path d="M0.5 0.5 H8.5 L4.5 5.5 Z" fill="#1e1e1e"/></svg>
<div class="a" style="left:1469.5px;top:127.5px;width:442.5px;height:820px;background:#f5f5f5;border:1px solid #cccedb;box-sizing:border-box;"></div>
<div class="a" style="left:1470.5px;top:128.5px;width:440.5px;height:61px;background:#eeeef2;"></div>
<span class="a t" style="left:1473.90px;top:131.71px;font-size:15.4px;line-height:20px;color:#444;letter-spacing:-0.148px;">Solution Explorer</span>
<svg class="a" style="left:1598px;top:138px" width="242" height="6.3"><defs><pattern id="g1598" width="5" height="5" patternUnits="userSpaceOnUse"><rect x="0" y="0" width="1.2" height="1.2" fill="#9a9cb0"/><rect x="2.5" y="2.5" width="1.2" height="1.2" fill="#9a9cb0"/></pattern></defs><rect width="242" height="6.3" fill="url(#g1598)"/></svg>
<svg class="a" style="left:1850px;top:138px;" width="10" height="6" viewBox="0 0 10 6"><path d="M0.3 0.5 H9.7 L5 5.5 Z" fill="#1e1e1e"/></svg>
<svg class="a" style="left:1870px;top:133px;" width="10" height="16" viewBox="0 0 10 16"><path d="M2.8 1 H7.2 V8 M2.8 1 V8 M0.8 8.3 H9.2 M5 8.5 V14.5 M6.4 1 V8" stroke="#1e1e1e" stroke-width="1.3" fill="none"/></svg>
<svg class="a" style="left:1891px;top:135px;" width="12" height="12" viewBox="0 0 12 12"><path d="M1.2 1.2 L10.8 10.8 M10.8 1.2 L1.2 10.8" stroke="#1e1e1e" stroke-width="1.7"/></svg>
<svg class="a" style="left:1480.5px;top:164px;" width="15" height="15" viewBox="0 0 15 15"><circle cx="7.5" cy="7.5" r="7.2" fill="#c6c6cc"/><path d="M11.5 7.5 H4.4 M7.4 4.2 L4 7.5 L7.4 10.8" stroke="#eeeef2" stroke-width="1.9" fill="none"/></svg>
<svg class="a" style="left:1507.5px;top:164px;" width="15" height="15" viewBox="0 0 15 15"><circle cx="7.5" cy="7.5" r="7.2" fill="#c6c6cc"/><path d="M3.5 7.5 H10.6 M7.6 4.2 L11 7.5 L7.6 10.8" stroke="#eeeef2" stroke-width="1.9" fill="none"/></svg>
<svg class="a" style="left:1532px;top:162px;" width="20" height="19" viewBox="0 0 20 19"><path d="M1.2 9.5 L10 1.5 L18.8 9.5" fill="none" stroke="#424242" stroke-width="1.7"/><path d="M3.8 9 V17.5 H16.2 V9" fill="none" stroke="#424242" stroke-width="1.7"/><rect x="8" y="11.5" width="4" height="6" fill="#424242"/></svg>
<svg class="a" style="left:1560px;top:161px;" width="20" height="20" viewBox="0 0 20 20"><rect x="1.2" y="8" width="11" height="9.5" fill="#f5f5f5" stroke="#424242" stroke-width="1.5"/><path d="M1.2 10.5 H12.2" stroke="#424242" stroke-width="1.5"/><path d="M9 1 H14 L15 2.2 H19.5 V10.5 H14 V6.5 H9 Z" fill="#dcb67a"/><path d="M2 4 H8 M6 2 L8.2 4 L6 6" stroke="#00539c" stroke-width="1.3" fill="none"/><path d="M19 15.5 H14 M16 13.5 L13.8 15.5 L16 17.5" stroke="#00539c" stroke-width="1.3" fill="none"/></svg>
<svg class="a" style="left:1586px;top:169.5px;" width="8" height="5" viewBox="0 0 8 5"><path d="M0.5 0.5 H7.5 L4 4.5 Z" fill="#717171"/></svg>
<div class="a" style="left:1602px;top:160px;width:1px;height:24px;background:#cccedb;"></div>
<svg class="a" style="left:1614px;top:162px;" width="18" height="19" viewBox="0 0 18 19"><circle cx="10.5" cy="11" r="6" fill="none" stroke="#424242" stroke-width="1.5"/><path d="M10.5 7.5 V11.3 H13.5" fill="none" stroke="#424242" stroke-width="1.3"/><path d="M0.5 0.8 H6 L4 3.2 V6 L2.5 5 V3.2 Z" fill="#424242"/></svg>
<svg class="a" style="left:1638px;top:169.5px;" width="8" height="5" viewBox="0 0 8 5"><path d="M0.5 0.5 H7.5 L4 4.5 Z" fill="#717171"/></svg>
<svg class="a" style="left:1655px;top:162px;" width="17" height="19" viewBox="0 0 17 19"><path d="M12.8 6.6 A6.2 6.2 0 1 0 14.6 11" fill="none" stroke="#00539c" stroke-width="2.6"/><path d="M7 0 L14.5 4.5 L8.5 9.3 Z" fill="#00539c"/></svg>
<svg class="a" style="left:1682px;top:163px;" width="17" height="17" viewBox="0 0 17 17"><path d="M5 5 V1.5 H15.5 V10.5 H12" fill="none" stroke="#424242" stroke-width="1.3"/><path d="M3.5 7 V4 H13.5 V12.5 H11" fill="none" stroke="#424242" stroke-width="1.3"/><rect x="1.5" y="7" width="9" height="8" fill="#f5f5f5" stroke="#424242" stroke-width="1.3"/><path d="M3.5 11 H8.5" stroke="#424242" stroke-width="1.3"/></svg>
<svg class="a" style="left:1707px;top:161px;" width="20" height="21" viewBox="0 0 20 21"><path d="M4.5 4.5 V1 H13 L17.5 5.5 V16.5 H15" fill="none" stroke="#424242" stroke-width="1.4"/><path d="M1.5 4.5 H10 L14.5 9 V19.5 H1.5 Z" fill="#f5f5f5" stroke="#424242" stroke-width="1.4"/><path d="M4.5 11 H11.5 M4.5 13.8 H11.5 M4.5 16.5 H11.5" stroke="#424242" stroke-width="1.2"/></svg>
<div class="a" style="left:1735px;top:160px;width:1px;height:24px;background:#cccedb;"></div>
<svg class="a" style="left:1745px;top:164px;" width="18" height="14" viewBox="0 0 18 14"><path d="M6.5 1.5 L1.5 7 L6.5 12.5 M11.5 1.5 L16.5 7 L11.5 12.5" fill="none" stroke="#424242" stroke-width="1.8"/></svg>
<svg class="a" style="left:1772px;top:162px;" width="19" height="19" viewBox="0 0 19 19"><path d="M2.5 16.5 L10.5 8.5" stroke="#424242" stroke-width="4.4" stroke-linecap="round"/><path d="M18.4 4.6 L15 8 L11.4 7.6 L11 4 L14.4 0.6 A5.8 5.8 0 0 0 7.8 8.4 A5.8 5.8 0 0 0 18.4 4.6 Z" fill="#424242"/></svg>
<div class="a" style="left:1795px;top:157px;width:27px;height:28.5px;background:#ecedf3;border:1px solid #6aa9e0;box-sizing:border-box;"></div>
<svg class="a" style="left:1799px;top:165px;" width="19" height="12" viewBox="0 0 19 12"><path d="M1 7.5 H9" stroke="#424242" stroke-width="1.3"/><rect x="8.5" y="4.5" width="9.5" height="5" fill="#424242"/></svg>
<div class="a" style="left:1471px;top:189.5px;width:440.5px;height:26px;background:#fff;border:1px solid #d3d4df;box-sizing:border-box;"></div>
<span class="a t" style="left:1475.90px;top:193.91px;font-size:15.4px;line-height:20px;color:#6d6d6d;letter-spacing:-0.281px;">Search Solution Explorer (Ctrl+;)</span>
<svg class="a" style="left:1877px;top:194px;" width="17" height="17" viewBox="0 0 17 17"><circle cx="10.6" cy="6" r="4.2" fill="none" stroke="#717171" stroke-width="2.1"/><path d="M7.6 9.2 L2 14.8" stroke="#717171" stroke-width="2.9" stroke-linecap="round"/></svg>
<svg class="a" style="left:1900px;top:201px;" width="8" height="5" viewBox="0 0 8 5"><path d="M0.5 0.5 H7.5 L4 4.5 Z" fill="#717171"/></svg>
<div class="a" style="left:1470.5px;top:586.4px;width:440.5px;height:23px;background:#cccedb;"></div>
<svg class="a" style="left:1477px;top:226px;" width="7" height="10" viewBox="0 0 7 10"><path d="M1.8 4.5 V3 Q1.8 1 3.5 1 Q5.2 1 5.2 3 V4.5" fill="none" stroke="#2fa3de" stroke-width="1.2"/><rect x="0.5" y="4.3" width="6" height="5.2" fill="#2fa3de"/><rect x="2.6" y="5.8" width="1.8" height="1.8" fill="#fff"/></svg>
<svg class="a" style="left:1485px;top:221px;" width="20" height="19" viewBox="0 0 20 19"><path d="M3 1.5 H19 V16.5 H14" fill="none" stroke="#424242" stroke-width="1.5"/><path d="M3 1.5 V7" stroke="#424242" stroke-width="1.5"/><rect x="3" y="1" width="16" height="2.6" fill="#424242"/><path d="M8.5 8.2 L12.2 9.8 V16.8 L8.5 18.5 Z" fill="#865fc5"/><path d="M1 10.5 L9 16.5 M1 16 L9 10.5" stroke="#865fc5" stroke-width="1.9" fill="none"/></svg>
<span class="a t" style="left:1510.90px;top:220.71px;font-size:15.4px;line-height:20px;color:#262626;letter-spacing:-0.222px;">Solution &#x27;ItHandyGuy.OnlineGame&#x27; (3 of 3 projects)</span>
<svg class="a" style="left:1483px;top:247.5px;" width="8" height="12" viewBox="0 0 8 12"><path d="M1 0.9 L6.6 6 L1 11.1 Z" fill="none" stroke="#1e1e1e" stroke-width="1.15"/></svg>
<svg class="a" style="left:1510px;top:246px;" width="18" height="15" viewBox="0 0 18 15"><path d="M0.5 2.8 H7 L8.5 1 H16 V2.8 H17.5 V14.2 H0.5 Z" fill="#dcb67a"/></svg>
<span class="a t" style="left:1533.90px;top:243.71px;font-size:15.4px;line-height:20px;color:#262626;letter-spacing:-0.518px;">Service</span>
<svg class="a" style="left:1482px;top:272.5px;" width="9" height="9" viewBox="0 0 9 9"><path d="M8 0.8 V8 H0.8 Z" fill="#1e1e1e"/></svg>
<svg class="a" style="left:1510px;top:269px;" width="18" height="15" viewBox="0 0 18 15"><path d="M1 3 H6.5 L8 1.2 H15.5 V13.8 H1 Z" fill="none" stroke="#dcb67a" stroke-width="1.4"/><path d="M3.5 6.5 H17.5 L15.2 13.8 H1.2 Z" fill="#e9cf9f" stroke="#dcb67a" stroke-width="1"/></svg>
<span class="a t" style="left:1533.40px;top:266.71px;font-size:15.4px;line-height:20px;color:#262626;letter-spacing:-0.259px;">Test</span>
<svg class="a" style="left:1505.5px;top:295.5px;" width="9" height="9" viewBox="0 0 9 9"><path d="M8 0.8 V8 H0.8 Z" fill="#1e1e1e"/></svg>
<svg class="a" style="left:1521.5px;top:293.5px;" width="8" height="11" viewBox="0 0 8 11"><path d="M0.8 6 L3 9.5 L7 0.8" fill="none" stroke="#e51400" stroke-width="1.6"/></svg>
<svg class="a" style="left:1530px;top:291px;" width="20" height="17" viewBox="0 0 20 17"><path d="M3 1 H19 V15.5 H15" fill="none" stroke="#424242" stroke-width="1.4"/><rect x="3" y="0.8" width="16" height="2.4" fill="#424242"/><path d="M5 3.5 H10 M6 3.5 V8 L1.5 15.5 H13.5 L9 8 V3.5" fill="#f5f5f5" stroke="#388a34" stroke-width="1.3"/><path d="M4.3 11 H10.7 L13 15 H2 Z" fill="#388a34"/></svg>
<span class="a t" style="left:1555.90px;top:289.71px;font-size:15.4px;line-height:20px;color:#262626;letter-spacing:-0.547px;">OnlineGame.MSTest</span>
<svg class="a" style="left:1528px;top:316.5px;" width="8" height="12" viewBox="0 0 8 12"><path d="M1 0.9 L6.6 6 L1 11.1 Z" fill="none" stroke="#1e1e1e" stroke-width="1.15"/></svg>
<svg class="a" style="left:1545px;top:318px;" width="7" height="10" viewBox="0 0 7 10"><path d="M1.8 4.5 V3 Q1.8 1 3.5 1 Q5.2 1 5.2 3 V4.5" fill="none" stroke="#2fa3de" stroke-width="1.2"/><rect x="0.5" y="4.3" width="6" height="5.2" fill="#2fa3de"/><rect x="2.6" y="5.8" width="1.8" height="1.8" fill="#fff"/></svg>
<svg class="a" style="left:1553.5px;top:313px;" width="19" height="19" viewBox="0 0 19 19"><path d="M2.5 16.5 L10.5 8.5" stroke="#424242" stroke-width="4.4" stroke-linecap="round"/><path d="M18.4 4.6 L15 8 L11.4 7.6 L11 4 L14.4 0.6 A5.8 5.8 0 0 0 7.8 8.4 A5.8 5.8 0 0 0 18.4 4.6 Z" fill="#424242"/></svg>
<span class="a t" style="left:1578.90px;top:312.71px;font-size:15.4px;line-height:20px;color:#262626;letter-spacing:-0.246px;">Properties</span>
<svg class="a" style="left:1528px;top:339.5px;" width="8" height="12" viewBox="0 0 8 12"><path d="M1 0.9 L6.6 6 L1 11.1 Z" fill="none" stroke="#1e1e1e" stroke-width="1.15"/></svg>
<svg class="a" style="left:1553px;top:341px;" width="19" height="9" viewBox="0 0 19 9"><rect x="1.5" y="2" width="4.5" height="4.5" fill="#424242"/><rect x="10.5" y="0.5" width="8" height="8" fill="#424242"/><path d="M6 4.3 H10.5" stroke="#424242" stroke-width="1.1"/></svg>
<span class="a t" style="left:1578.90px;top:335.71px;font-size:15.4px;line-height:20px;color:#262626;letter-spacing:-0.602px;">References</span>
<svg class="a" style="left:1545px;top:364px;" width="7" height="10" viewBox="0 0 7 10"><path d="M1.8 4.5 V3 Q1.8 1 3.5 1 Q5.2 1 5.2 3 V4.5" fill="none" stroke="#2fa3de" stroke-width="1.2"/><rect x="0.5" y="4.3" width="6" height="5.2" fill="#2fa3de"/><rect x="2.6" y="5.8" width="1.8" height="1.8" fill="#fff"/></svg>
<svg class="a" style="left:1553.5px;top:359px;" width="18" height="19" viewBox="0 0 18 19"><path d="M4.5 1 H12 L17 6 V18 H4.5 Z" fill="#f5f5f5" stroke="#424242" stroke-width="1.3"/><path d="M12 1 V6 H17" fill="none" stroke="#424242" stroke-width="1.1"/><path d="M2.2 5 V9 M5.8 5 V9" stroke="#424242" stroke-width="1.4"/><path d="M0.8 9 H7.2 V12 Q7.2 14.5 4 14.5 Q0.8 14.5 0.8 12 Z" fill="#424242"/><path d="M4 14 V18" stroke="#424242" stroke-width="1.5"/></svg>
<span class="a t" style="left:1578.90px;top:358.71px;font-size:15.4px;line-height:20px;color:#262626;letter-spacing:-0.269px;">packages.config</span>
<svg class="a" style="left:1528px;top:385.5px;" width="8" height="12" viewBox="0 0 8 12"><path d="M1 0.9 L6.6 6 L1 11.1 Z" fill="none" stroke="#1e1e1e" stroke-width="1.15"/></svg>
<svg class="a" style="left:1545px;top:387px;" width="7" height="10" viewBox="0 0 7 10"><path d="M1.8 4.5 V3 Q1.8 1 3.5 1 Q5.2 1 5.2 3 V4.5" fill="none" stroke="#2fa3de" stroke-width="1.2"/><rect x="0.5" y="4.3" width="6" height="5.2" fill="#2fa3de"/><rect x="2.6" y="5.8" width="1.8" height="1.8" fill="#fff"/></svg>
<svg class="a" style="left:1556px;top:385px;" width="17" height="13" viewBox="0 0 17 13"><text x="0" y="11" font-family="Liberation Sans" font-weight="700" font-size="12.5" fill="#388a34">C</text><path d="M10.8 2.5 V8 M13.6 2.5 V8 M9.3 4.2 H15.2 M9.3 6.4 H15.2" stroke="#388a34" stroke-width="1.3"/></svg>
<span class="a t" style="left:1578.90px;top:381.71px;font-size:15.4px;line-height:20px;color:#262626;letter-spacing:-0.657px;">S01BasicAssertion.cs</span>
<svg class="a" style="left:1528px;top:408.5px;" width="8" height="12" viewBox="0 0 8 12"><path d="M1 0.9 L6.6 6 L1 11.1 Z" fill="none" stroke="#1e1e1e" stroke-width="1.15"/></svg>
<svg class="a" style="left:1545px;top:410px;" width="7" height="10" viewBox="0 0 7 10"><path d="M1.8 4.5 V3 Q1.8 1 3.5 1 Q5.2 1 5.2 3 V4.5" fill="none" stroke="#2fa3de" stroke-width="1.2"/><rect x="0.5" y="4.3" width="6" height="5.2" fill="#2fa3de"/><rect x="2.6" y="5.8" width="1.8" height="1.8" fill="#fff"/></svg>
<svg class="a" style="left:1556px;top:408px;" width="17" height="13" viewBox="0 0 17 13"><text x="0" y="11" font-family="Liberation Sans" font-weight="700" font-size="12.5" fill="#388a34">C</text><path d="M10.8 2.5 V8 M13.6 2.5 V8 M9.3 4.2 H15.2 M9.3 6.4 H15.2" stroke="#388a34" stroke-width="1.3"/></svg>
<span class="a t" style="left:1578.90px;top:404.71px;font-size:15.4px;line-height:20px;color:#262626;letter-spacing:-0.608px;">S02AssertionScope.cs</span>
<svg class="a" style="left:1528px;top:431.5px;" width="8" height="12" viewBox="0 0 8 12"><path d="M1 0.9 L6.6 6 L1 11.1 Z" fill="none" stroke="#1e1e1e" stroke-width="1.15"/></svg>
<svg class="a" style="left:1545px;top:435px;" width="8" height="8" viewBox="0 0 8 8"><path d="M4 0.5 V7.5 M0.5 4 H7.5" stroke="#4b9a48" stroke-width="1.2"/></svg>
<svg class="a" style="left:1556px;top:431px;" width="17" height="13" viewBox="0 0 17 13"><text x="0" y="11" font-family="Liberation Sans" font-weight="700" font-size="12.5" fill="#388a34">C</text><path d="M10.8 2.5 V8 M13.6 2.5 V8 M9.3 4.2 H15.2 M9.3 6.4 H15.2" stroke="#388a34" stroke-width="1.3"/></svg>
<span class="a t" style="left:1578.90px;top:427.71px;font-size:15.4px;line-height:20px;color:#262626;letter-spacing:-0.511px;">S03StringAssertion.cs</span>
<svg class="a" style="left:1505.5px;top:456.5px;" width="9" height="9" viewBox="0 0 9 9"><path d="M8 0.8 V8 H0.8 Z" fill="#1e1e1e"/></svg>
<svg class="a" style="left:1521.5px;top:454.5px;" width="8" height="11" viewBox="0 0 8 11"><path d="M0.8 6 L3 9.5 L7 0.8" fill="none" stroke="#e51400" stroke-width="1.6"/></svg>
<svg class="a" style="left:1530px;top:452.5px;" width="19" height="16" viewBox="0 0 19 16"><rect x="0.8" y="0.8" width="17.4" height="14.4" fill="#f5f5f5" stroke="#388a34" stroke-width="1.4"/><text x="2.6" y="11.8" font-family="Liberation Sans" font-weight="700" font-size="9.5" fill="#333">C#</text></svg>
<span class="a t" style="left:1555.90px;top:450.71px;font-size:15.4px;line-height:20px;color:#262626;letter-spacing:-0.342px;">OnlineGame.NUnit</span>
<svg class="a" style="left:1528px;top:477.5px;" width="8" height="12" viewBox="0 0 8 12"><path d="M1 0.9 L6.6 6 L1 11.1 Z" fill="none" stroke="#1e1e1e" stroke-width="1.15"/></svg>
<svg class="a" style="left:1545px;top:479px;" width="7" height="10" viewBox="0 0 7 10"><path d="M1.8 4.5 V3 Q1.8 1 3.5 1 Q5.2 1 5.2 3 V4.5" fill="none" stroke="#2fa3de" stroke-width="1.2"/><rect x="0.5" y="4.3" width="6" height="5.2" fill="#2fa3de"/><rect x="2.6" y="5.8" width="1.8" height="1.8" fill="#fff"/></svg>
<svg class="a" style="left:1553.5px;top:474px;" width="19" height="19" viewBox="0 0 19 19"><path d="M2.5 16.5 L10.5 8.5" stroke="#424242" stroke-width="4.4" stroke-linecap="round"/><path d="M18.4 4.6 L15 8 L11.4 7.6 L11 4 L14.4 0.6 A5.8 5.8 0 0 0 7.8 8.4 A5.8 5.8 0 0 0 18.4 4.6 Z" fill="#424242"/></svg>
<span class="a t" style="left:1578.90px;top:473.71px;font-size:15.4px;line-height:20px;color:#262626;letter-spacing:-0.246px;">Properties</span>
<svg class="a" style="left:1528px;top:500.5px;" width="8" height="12" viewBox="0 0 8 12"><path d="M1 0.9 L6.6 6 L1 11.1 Z" fill="none" stroke="#1e1e1e" stroke-width="1.15"/></svg>
<svg class="a" style="left:1553px;top:502px;" width="19" height="9" viewBox="0 0 19 9"><rect x="1.5" y="2" width="4.5" height="4.5" fill="#424242"/><rect x="10.5" y="0.5" width="8" height="8" fill="#424242"/><path d="M6 4.3 H10.5" stroke="#424242" stroke-width="1.1"/></svg>
<span class="a t" style="left:1578.90px;top:496.71px;font-size:15.4px;line-height:20px;color:#262626;letter-spacing:-0.602px;">References</span>
<svg class="a" style="left:1545px;top:525px;" width="7" height="10" viewBox="0 0 7 10"><path d="M1.8 4.5 V3 Q1.8 1 3.5 1 Q5.2 1 5.2 3 V4.5" fill="none" stroke="#2fa3de" stroke-width="1.2"/><rect x="0.5" y="4.3" width="6" height="5.2" fill="#2fa3de"/><rect x="2.6" y="5.8" width="1.8" height="1.8" fill="#fff"/></svg>
<svg class="a" style="left:1553.5px;top:520px;" width="18" height="19" viewBox="0 0 18 19"><path d="M4.5 1 H12 L17 6 V18 H4.5 Z" fill="#f5f5f5" stroke="#424242" stroke-width="1.3"/><path d="M12 1 V6 H17" fill="none" stroke="#424242" stroke-width="1.1"/><path d="M2.2 5 V9 M5.8 5 V9" stroke="#424242" stroke-width="1.4"/><path d="M0.8 9 H7.2 V12 Q7.2 14.5 4 14.5 Q0.8 14.5 0.8 12 Z" fill="#424242"/><path d="M4 14 V18" stroke="#424242" stroke-width="1.5"/></svg>
<span class="a t" style="left:1578.90px;top:519.71px;font-size:15.4px;line-height:20px;color:#262626;letter-spacing:-0.269px;">packages.config</span>
<svg class="a" style="left:1528px;top:546.5px;" width="8" height="12" viewBox="0 0 8 12"><path d="M1 0.9 L6.6 6 L1 11.1 Z" fill="none" stroke="#1e1e1e" stroke-width="1.15"/></svg>
<svg class="a" style="left:1545px;top:548px;" width="7" height="10" viewBox="0 0 7 10"><path d="M1.8 4.5 V3 Q1.8 1 3.5 1 Q5.2 1 5.2 3 V4.5" fill="none" stroke="#2fa3de" stroke-width="1.2"/><rect x="0.5" y="4.3" width="6" height="5.2" fill="#2fa3de"/><rect x="2.6" y="5.8" width="1.8" height="1.8" fill="#fff"/></svg>
<svg class="a" style="left:1556px;top:546px;" width="17" height="13" viewBox="0 0 17 13"><text x="0" y="11" font-family="Liberation Sans" font-weight="700" font-size="12.5" fill="#388a34">C</text><path d="M10.8 2.5 V8 M13.6 2.5 V8 M9.3 4.2 H15.2 M9.3 6.4 H15.2" stroke="#388a34" stroke-width="1.3"/></svg>
<span class="a t" style="left:1578.90px;top:542.71px;font-size:15.4px;line-height:20px;color:#262626;letter-spacing:-0.657px;">S01BasicAssertion.cs</span>
<svg class="a" style="left:1528px;top:569.5px;" width="8" height="12" viewBox="0 0 8 12"><path d="M1 0.9 L6.6 6 L1 11.1 Z" fill="none" stroke="#1e1e1e" stroke-width="1.15"/></svg>
<svg class="a" style="left:1545px;top:571px;" width="7" height="10" viewBox="0 0 7 10"><path d="M1.8 4.5 V3 Q1.8 1 3.5 1 Q5.2 1 5.2 3 V4.5" fill="none" stroke="#2fa3de" stroke-width="1.2"/><rect x="0.5" y="4.3" width="6" height="5.2" fill="#2fa3de"/><rect x="2.6" y="5.8" width="1.8" height="1.8" fill="#fff"/></svg>
<svg class="a" style="left:1556px;top:569px;" width="17" height="13" viewBox="0 0 17 13"><text x="0" y="11" font-family="Liberation Sans" font-weight="700" font-size="12.5" fill="#388a34">C</text><path d="M10.8 2.5 V8 M13.6 2.5 V8 M9.3 4.2 H15.2 M9.3 6.4 H15.2" stroke="#388a34" stroke-width="1.3"/></svg>
<span class="a t" style="left:1578.90px;top:565.71px;font-size:15.4px;line-height:20px;color:#262626;letter-spacing:-0.608px;">S02AssertionScope.cs</span>
<svg class="a" style="left:1528px;top:592.5px;" width="8" height="12" viewBox="0 0 8 12"><path d="M1 0.9 L6.6 6 L1 11.1 Z" fill="none" stroke="#1e1e1e" stroke-width="1.15"/></svg>
<svg class="a" style="left:1545px;top:596px;" width="8" height="8" viewBox="0 0 8 8"><path d="M4 0.5 V7.5 M0.5 4 H7.5" stroke="#4b9a48" stroke-width="1.2"/></svg>
<svg class="a" style="left:1556px;top:592px;" width="17" height="13" viewBox="0 0 17 13"><text x="0" y="11" font-family="Liberation Sans" font-weight="700" font-size="12.5" fill="#388a34">C</text><path d="M10.8 2.5 V8 M13.6 2.5 V8 M9.3 4.2 H15.2 M9.3 6.4 H15.2" stroke="#388a34" stroke-width="1.3"/></svg>
<span class="a t" style="left:1578.90px;top:588.71px;font-size:15.4px;line-height:20px;color:#262626;letter-spacing:-0.511px;">S03StringAssertion.cs</span>
<span class="a t" style="left:1475.90px;top:949.91px;font-size:15.4px;line-height:20px;color:#444;letter-spacing:-0.345px;">Unit Test Cover...</span>
<span class="a t" style="left:1602.90px;top:949.91px;font-size:15.4px;line-height:20px;color:#444;letter-spacing:-0.246px;">Properties</span>
<div class="a" style="left:1677.5px;top:947px;width:126px;height:24.5px;background:#f5f5f5;border:1px solid #cccedb;box-sizing:border-box;border-top:none;"></div>
<span class="a t" style="left:1683.90px;top:949.91px;font-size:15.4px;line-height:20px;color:#1a77be;letter-spacing:-0.156px;">Solution Explor...</span>
<span class="a t" style="left:1810.90px;top:949.91px;font-size:15.4px;line-height:20px;color:#444;letter-spacing:-0.272px;">Team Explorer</span>
<div class="a" style="left:1176px;top:773.8px;width:750px;height:79.2px;background:#f6f6f6;border:1px solid #cdcdd2;box-sizing:border-box;"></div>
<svg class="a" style="left:1192px;top:785px;" width="18" height="18" viewBox="0 0 18 18"><path d="M0.3 5.4 L5.8 0.3 L10.6 4.3 L5 9.6 Z" fill="#c27d1a"/><path d="M8.5 8 H12.5 M10.6 8 V15 H12" fill="none" stroke="#c27d1a" stroke-width="1.5"/><path d="M14.6 5 L17.6 8 L14.6 11 L11.6 8 Z M14.2 12 L17.2 15 L14.2 18 L11.2 15 Z" fill="#c27d1a"/></svg>
<span class="a t" style="left:1215.90px;top:785.97px;font-size:14.6px;line-height:19px;color:#0000ff;letter-spacing:-0.510px;">class</span>
<span class="a t" style="left:1250.40px;top:785.97px;font-size:14.6px;line-height:19px;color:#1e1e1e;letter-spacing:-0.503px;">System.</span>
<span class="a t" style="left:1299.90px;top:785.97px;font-size:14.6px;line-height:19px;color:#2b91af;letter-spacing:0.263px;">String</span>
<span class="a t" style="left:1190.90px;top:805.97px;font-size:14.6px;line-height:19px;color:#262626;letter-spacing:-0.018px;">Represents text as a sequence of UTF-16 code units.To browse the .NET Framework source code for this type,</span>
<span class="a t" style="left:1190.90px;top:825.97px;font-size:14.6px;line-height:19px;color:#262626;letter-spacing:-0.156px;">see the Reference Source.</span>
<span class="a t" style="left:7.90px;top:979.11px;font-size:15.4px;line-height:20px;color:#444;letter-spacing:-0.521px;">Package Manager Console</span>
<span class="a t" style="left:196.90px;top:979.11px;font-size:15.4px;line-height:20px;color:#444;letter-spacing:0.083px;">Output</span>
<span class="a t" style="left:257.90px;top:979.11px;font-size:15.4px;line-height:20px;color:#444;letter-spacing:-0.374px;">Error List</span>
<div class="a" style="left:8px;top:1003.8px;width:174px;height:7.4px;background:#cccdd4;"></div>
<div class="a" style="left:197px;top:1003.8px;width:46px;height:7.4px;background:#cccdd4;"></div>
<div class="a" style="left:258px;top:1003.8px;width:58px;height:7.4px;background:#cccdd4;"></div>
<svg class="a" style="left:5px;top:1019px;" width="22" height="16" viewBox="0 0 22 16"><path d="M5 1.5 H20.5 L17 14.5 H1.5 Z" fill="none" stroke="#fff" stroke-width="1.5" stroke-linejoin="round"/></svg>
<span class="a t" style="left:34.90px;top:1016.81px;font-size:15.4px;line-height:20px;color:#fff;letter-spacing:-0.405px;">Test run finished in 764 ms. 1 Total tests - 0 Passed, 1 Failed, 0 Skipped</span>
<span class="a t" style="left:826.90px;top:1016.81px;font-size:15.4px;line-height:20px;color:#fff;letter-spacing:-0.730px;">Ln 801</span>
<span class="a t" style="left:940.90px;top:1016.81px;font-size:15.4px;line-height:20px;color:#fff;letter-spacing:-0.300px;">Col 73</span>
<span class="a t" style="left:1054.90px;top:1016.81px;font-size:15.4px;line-height:20px;color:#fff;letter-spacing:-0.676px;">Ch 73</span>
<span class="a t" style="left:1224.90px;top:1016.81px;font-size:15.4px;line-height:20px;color:#fff;letter-spacing:-0.652px;">INS</span>
<svg class="a" style="left:1316px;top:1019px;" width="13" height="15" viewBox="0 0 13 15"><path d="M6.5 14 V2.5 M1.5 7 L6.5 1.8 L11.5 7" fill="none" stroke="#fff" stroke-width="2"/></svg>
<span class="a t" style="left:1339.40px;top:1016.81px;font-size:15.4px;line-height:20px;color:#fff;letter-spacing:0.637px;">0</span>
<svg class="a" style="left:1377px;top:1018px;" width="16" height="16" viewBox="0 0 16 16"><path d="M1.5 14.5 L2.5 10.5 L10 3 L13 6 L5.5 13.5 Z" fill="#fff"/><path d="M11 2 L12.5 0.8 L15.2 3.5 L14 5 Z" fill="#fff"/></svg>
<span class="a t" style="left:1401.90px;top:1016.81px;font-size:15.4px;line-height:20px;color:#fff;letter-spacing:0.137px;">4</span>
<svg class="a" style="left:1437px;top:1017px;" width="20" height="20" viewBox="0 0 20 20"><path d="M10 0.8 L19.2 10 L10 19.2 L0.8 10 Z" fill="#fff"/><path d="M7.5 5.5 L12.5 10.5 M10 8 V14" stroke="#007acc" stroke-width="1.5"/><circle cx="10" cy="14" r="1.6" fill="#007acc"/><circle cx="12.7" cy="10.7" r="1.6" fill="#007acc"/><circle cx="7.6" cy="5.6" r="1.3" fill="#007acc"/></svg>
<span class="a t" style="left:1463.90px;top:1016.81px;font-size:15.4px;line-height:20px;color:#fff;letter-spacing:-1.063px;">KL01</span>
<svg class="a" style="left:1523px;top:1018px;" width="19" height="17" viewBox="0 0 19 17"><path d="M3 2.5 L9.5 9 V16 M16 2.5 L9.5 9" fill="none" stroke="#fff" stroke-width="2.2"/><path d="M0.8 1 H6 L0.8 6.2 Z M18.2 1 H13 L18.2 6.2 Z" fill="#fff"/></svg>
<span class="a t" style="left:1549.90px;top:1016.81px;font-size:15.4px;line-height:20px;color:#fff;letter-spacing:-0.588px;">KL/04B_NUnit_KL/00_Main</span>
<svg class="a" style="left:1731px;top:1021px;" width="12" height="8" viewBox="0 0 12 8"><path d="M0.5 7 L6 0.8 L11.5 7 Z" fill="#fff"/></svg>
<svg class="a" style="left:1774px;top:1016px;" width="26" height="24" viewBox="0 0 26 24"><path d="M3 14.5 Q5 12 5 8 Q5 3 8.5 3 Q12 3 12 8 Q12 12 14 14.5 Z" fill="#b9d3ea"/><circle cx="8.5" cy="16.5" r="1.6" fill="#b9d3ea"/><circle cx="8.5" cy="2.8" r="1.2" fill="#b9d3ea"/><circle cx="18.5" cy="15.5" r="6.3" fill="#e51400"/><text x="16.3" y="19.5" font-family="Liberation Sans" font-size="10.5" fill="#fff">1</text></svg>
<svg class="a" style="left:1826px;top:1016px;" width="20" height="21" viewBox="0 0 20 21"><path d="M3 8 H9.5 M3 8 V19 H13.5 V13" fill="none" stroke="#fff" stroke-width="1.6"/><path d="M11.5 2.5 L16.5 1.5 L14.8 12.2 L9.8 13.2 Z" fill="none" stroke="#fff" stroke-width="1.5"/><path d="M6 14.5 L9.5 11" stroke="#f5a623" stroke-width="2"/><rect x="11.3" y="6" width="3.2" height="3.2" fill="#f5a623"/></svg>
<svg class="a" style="left:1865px;top:1014.5px;" width="25" height="25" viewBox="0 0 25 25"><circle cx="11.5" cy="12" r="9.8" fill="#fff" stroke="#5a5a5a" stroke-width="1.6"/><circle cx="19" cy="19.5" r="3.4" fill="#333" stroke="#fff" stroke-width="1"/></svg>
<svg class="a" style="left:1892.5px;top:1014px;" width="25" height="25" viewBox="0 0 25 25"><circle cx="12.5" cy="12.5" r="11.3" fill="#2c9a3b" stroke="#fff" stroke-width="1.8"/><path d="M6.5 13 L10.8 17.3 L18 7.5" fill="none" stroke="#fff" stroke-width="2.7"/></svg>
</body></html>
